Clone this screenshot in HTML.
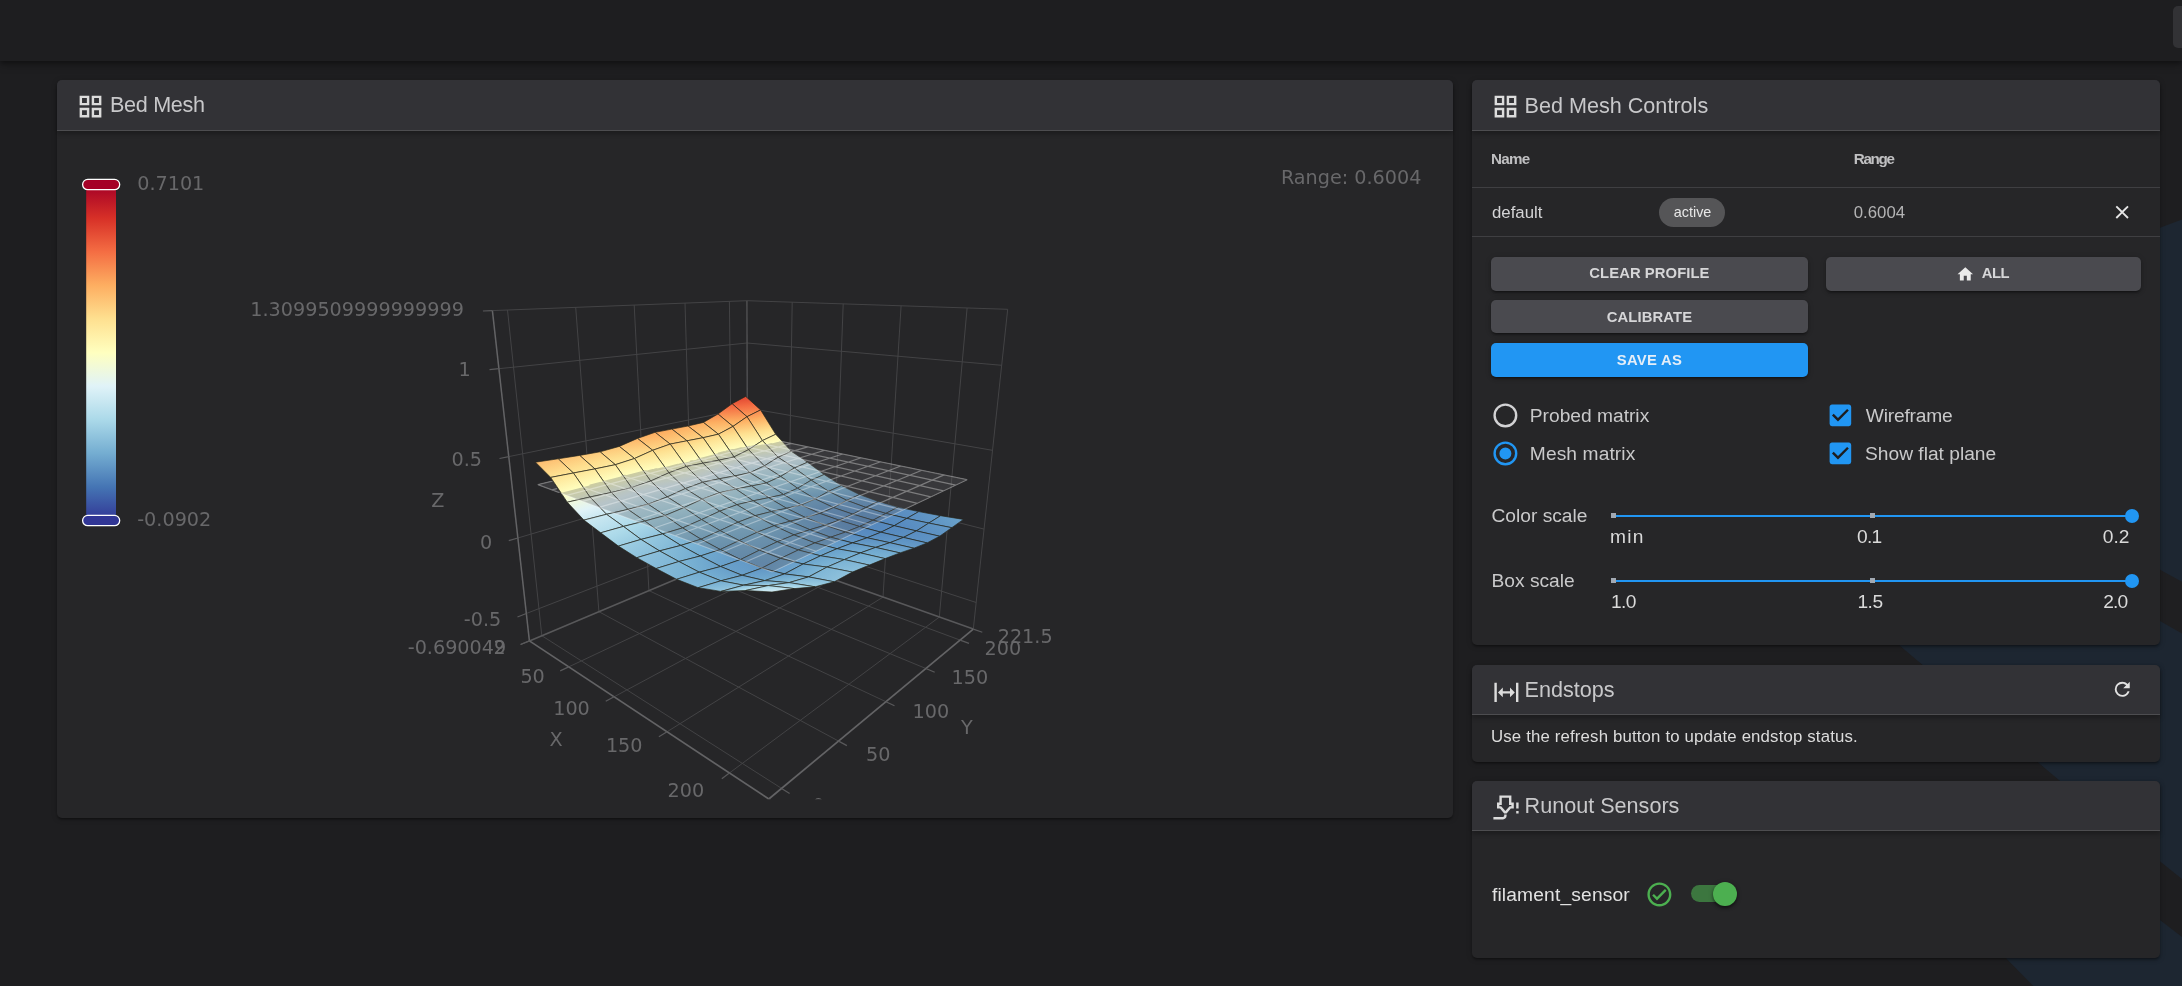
<!DOCTYPE html>
<html lang="en"><head><meta charset="utf-8"><title>fluidd</title>
<style>
html,body{margin:0;padding:0}
body{width:2182px;height:986px;overflow:hidden;background:#1e1e20;font-family:'Liberation Sans',sans-serif;position:relative}
.bg{position:absolute;left:0;top:0}
.appbar{position:absolute;left:0;top:0;width:2182px;height:61px;background:#1e1e20;box-shadow:0 2px 5px rgba(0,0,0,.35),0 5px 8px rgba(0,0,0,.18)}
.tbtn{position:absolute;left:2173px;top:6px;width:20px;height:42px;border-radius:5px;background:#323235}
.card{position:absolute;background:#262628;border-radius:5px;box-shadow:0 2px 2px -1px rgba(0,0,0,.25),0 2px 3px rgba(0,0,0,.2),0 1px 6px rgba(0,0,0,.16)}
.hd{position:absolute;left:0;top:0;right:0;height:50px;background:#323236;border-radius:5px 5px 0 0;border-bottom:1px solid #4d4d50;box-shadow:0 3px 5px rgba(0,0,0,.28)}
.t{position:absolute;white-space:nowrap}
.ic{position:absolute}
.chart{position:absolute;left:0;top:0}
.hl{position:absolute;height:1px;background:#3f3f42}
.btn{position:absolute;height:33.5px;border-radius:5px;background:#4a4a4f;box-shadow:0 3px 2px -2px rgba(0,0,0,.3),0 2px 3px rgba(0,0,0,.2),0 1px 6px rgba(0,0,0,.14)}
.chip{position:absolute;background:#555557;border-radius:15px}
.trk{position:absolute;height:2.4px;background:#2196f3}
.thumb{position:absolute;width:14px;height:14px;border-radius:50%;background:#2196f3}
.tk{position:absolute;width:5px;height:4.8px;background:#a2a9b2}
#app{position:absolute;left:0;top:0;width:2182px;height:986px;opacity:.999}
</style></head><body><div id="app">
<svg class="bg" width="2182" height="986" viewBox="0 0 2182 986">
<polygon points="2182,219.5 1634,424 1899,645 2066,786 2182,879" fill="#1d2631"/>
<polygon points="1900,426.7 2160,569.7 2182,581.8 2182,633.5 2160,621 1900,478" fill="#1f1f21"/>
<polygon points="2160,920 2182,937 2182,986 2033.3,986 2005.8,958 1960,911 2100,874" fill="#1d2631"/>
</svg>
<div class="appbar"></div><div class="tbtn"></div>
<div class="card" style="left:57px;top:80px;width:1396px;height:738px"><div class="hd"></div></div>
<svg class="ic" style="left:75.80px;top:92.20px" width="29.00" height="29.00" viewBox="0 0 24 24"><path fill="#dcdcdc" d="M3 11H11V3H3M5 5H9V9H5M13 21H21V13H13M15 15H19V19H15M3 21H11V13H3M5 15H9V19H5M13 3V11H21V3M19 9H15V5H19Z"/></svg>
<span class="t" id="t_bedmesh" style="top:91.02px;font-size:21.60px;line-height:28px;color:#c8c8ca;letter-spacing:-0.310px;left:110.00px;">Bed Mesh</span>
<div class="card" style="left:1472px;top:80px;width:688px;height:565px"><div class="hd"></div></div>
<svg class="ic" style="left:1490.90px;top:92.20px" width="29.00" height="29.00" viewBox="0 0 24 24"><path fill="#dcdcdc" d="M3 11H11V3H3M5 5H9V9H5M13 21H21V13H13M15 15H19V19H15M3 21H11V13H3M5 15H9V19H5M13 3V11H21V3M19 9H15V5H19Z"/></svg>
<span class="t" id="t_controls" style="top:91.52px;font-size:21.60px;line-height:28px;color:#c8c8ca;left:1524.55px;">Bed Mesh Controls</span>
<span class="t" id="t_name" style="top:149.23px;font-size:15.20px;line-height:20px;color:#c0c0c2;font-weight:700;letter-spacing:-0.750px;left:1491.00px;">Name</span>
<span class="t" id="t_range" style="top:149.23px;font-size:15.20px;line-height:20px;color:#c0c0c2;font-weight:700;letter-spacing:-1.300px;left:1853.75px;">Range</span>
<div class="hl" style="left:1472px;top:187px;width:688px"></div>
<span class="t" id="t_default" style="top:201.88px;font-size:16.80px;line-height:22px;color:#d4d4d6;left:1492.00px;">default</span>
<div class="chip" style="left:1659px;top:198.2px;width:66px;height:28.8px"></div>
<span class="t" id="t_active" style="top:202.51px;font-size:14.40px;line-height:19px;color:#e8e8e8;left:1673.75px;">active</span>
<span class="t" id="t_0604" style="top:201.88px;font-size:16.80px;line-height:22px;color:#b4b4b5;left:1853.75px;">0.6004</span>
<svg class="ic" style="left:2111.10px;top:200.90px" width="22.30" height="22.30" viewBox="0 0 24 24"><path fill="#e6e6e6" d="M19,6.41L17.59,5L12,10.59L6.41,5L5,6.41L10.59,12L5,17.59L6.41,19L12,13.41L17.59,19L19,17.59L13.41,12L19,6.41Z"/></svg>
<div class="hl" style="left:1472px;top:236px;width:688px"></div>
<div class="btn" style="left:1491px;top:257px;width:316.5px"></div>
<span class="t" id="t_clear" style="top:263.92px;font-size:14.80px;line-height:19px;color:#d6d6d8;font-weight:700;letter-spacing:0.080px;left:1649.44px;transform:translateX(-50%);">CLEAR PROFILE</span>
<div class="btn" style="left:1826.3px;top:257px;width:315.2px"></div>
<svg class="ic" style="left:1956.00px;top:264.50px" width="18.60" height="18.60" viewBox="0 0 24 24"><path fill="#eaeaea" d="M10,20V14H14V20H19V12H22L12,3L2,12H5V20H10Z"/></svg>
<span class="t" id="t_all" style="top:264.42px;font-size:14.80px;line-height:19px;color:#d6d6d8;font-weight:700;letter-spacing:-0.450px;left:1981.80px;">ALL</span>
<div class="btn" style="left:1491px;top:300px;width:316.5px;height:33px"></div>
<span class="t" id="t_calib" style="top:307.67px;font-size:14.80px;line-height:19px;color:#d6d6d8;font-weight:700;letter-spacing:0.120px;left:1649.46px;transform:translateX(-50%);">CALIBRATE</span>
<div class="btn" style="left:1491px;top:343px;width:316.5px;height:34px;background:#2196f3"></div>
<span class="t" id="t_saveas" style="top:350.67px;font-size:14.80px;line-height:19px;color:#e4eef8;font-weight:700;letter-spacing:0.300px;left:1649.45px;transform:translateX(-50%);">SAVE AS</span>
<svg class="ic" style="left:1490.80px;top:401.20px" width="28.80" height="28.80" viewBox="0 0 24 24"><path fill="#d2d2d4" d="M12,20A8,8 0 0,1 4,12A8,8 0 0,1 12,4A8,8 0 0,1 20,12A8,8 0 0,1 12,20M12,2A10,10 0 0,0 2,12A10,10 0 0,0 12,22A10,10 0 0,0 22,12A10,10 0 0,0 12,2Z"/></svg>
<span class="t" id="t_probed" style="top:402.85px;font-size:19.20px;line-height:25px;color:#c9c9ca;left:1529.80px;">Probed matrix</span>
<svg class="ic" style="left:1490.80px;top:439.30px" width="28.80" height="28.80" viewBox="0 0 24 24"><path fill="#2196f3" d="M12,20A8,8 0 0,1 4,12A8,8 0 0,1 12,4A8,8 0 0,1 20,12A8,8 0 0,1 12,20M12,2A10,10 0 0,0 2,12A10,10 0 0,0 12,22A10,10 0 0,0 22,12A10,10 0 0,0 12,2M12,7A5,5 0 0,0 7,12A5,5 0 0,0 12,17A5,5 0 0,0 17,12A5,5 0 0,0 12,7Z"/></svg>
<span class="t" id="t_meshm" style="top:440.85px;font-size:19.20px;line-height:25px;color:#c9c9ca;letter-spacing:0.100px;left:1529.80px;">Mesh matrix</span>
<div style="position:absolute;left:1832px;top:406px;width:18px;height:18px;background:#1d1d1f"></div>
<svg class="ic" style="left:1826.40px;top:401.00px" width="28.80" height="28.80" viewBox="0 0 24 24"><path fill="#2196f3" d="M10,17L5,12L6.41,10.58L10,14.17L17.59,6.58L19,8M19,3H5C3.89,3 3,3.89 3,5V19A2,2 0 0,0 5,21H19A2,2 0 0,0 21,19V5C21,3.89 20.1,3 19,3Z"/></svg>
<span class="t" id="t_wire" style="top:402.85px;font-size:19.20px;line-height:25px;color:#c9c9ca;letter-spacing:-0.190px;left:1865.80px;">Wireframe</span>
<div style="position:absolute;left:1832px;top:444px;width:18px;height:18px;background:#1d1d1f"></div>
<svg class="ic" style="left:1826.40px;top:439.00px" width="28.80" height="28.80" viewBox="0 0 24 24"><path fill="#2196f3" d="M10,17L5,12L6.41,10.58L10,14.17L17.59,6.58L19,8M19,3H5C3.89,3 3,3.89 3,5V19A2,2 0 0,0 5,21H19A2,2 0 0,0 21,19V5C21,3.89 20.1,3 19,3Z"/></svg>
<span class="t" id="t_flat" style="top:440.85px;font-size:19.20px;line-height:25px;color:#c9c9ca;left:1865.00px;">Show flat plane</span>
<span class="t" id="t_cscale" style="top:502.60px;font-size:19.20px;line-height:25px;color:#c9c9ca;left:1491.50px;">Color scale</span>
<div class="trk" style="left:1611.3px;top:515.05px;width:520px"></div>
<div class="tk" style="left:1611.3px;top:513.3px"></div><div class="tk" style="left:1870.3px;top:513.3px"></div>
<div class="thumb" style="left:2124.5px;top:509.25px"></div>
<span class="t" id="t_min" style="top:523.85px;font-size:19.20px;line-height:25px;color:#dadada;letter-spacing:1.200px;left:1610.00px;">min</span>
<span class="t" id="t_01" style="top:523.85px;font-size:19.20px;line-height:25px;color:#dadada;letter-spacing:-0.750px;left:1857.00px;">0.1</span>
<span class="t" id="t_02" style="top:523.85px;font-size:19.20px;line-height:25px;color:#dadada;left:2102.75px;">0.2</span>
<span class="t" id="t_bscale" style="top:568.35px;font-size:19.20px;line-height:25px;color:#c9c9ca;left:1491.50px;">Box scale</span>
<div class="trk" style="left:1611.3px;top:580.05px;width:520px"></div>
<div class="tk" style="left:1611.3px;top:578.3px"></div><div class="tk" style="left:1870.3px;top:578.3px"></div>
<div class="thumb" style="left:2124.5px;top:574.25px"></div>
<span class="t" id="t_10" style="top:588.85px;font-size:19.20px;line-height:25px;color:#dadada;letter-spacing:-0.650px;left:1611.00px;">1.0</span>
<span class="t" id="t_15" style="top:588.85px;font-size:19.20px;line-height:25px;color:#dadada;letter-spacing:-0.500px;left:1857.45px;">1.5</span>
<span class="t" id="t_20" style="top:588.85px;font-size:19.20px;line-height:25px;color:#dadada;letter-spacing:-0.900px;left:2103.25px;">2.0</span>
<div class="card" style="left:1472px;top:665px;width:688px;height:97px"><div class="hd" style="height:49px"></div></div>
<svg class="ic" style="left:1491.60px;top:677.70px" width="28.80" height="28.80" viewBox="0 0 24 24"><path fill="#dcdcdc" d="M9,11H15V8L19,12L15,16V13H9V16L5,12L9,8V11M2,20V4H4V20H2M20,20V4H22V20H20Z"/></svg>
<span class="t" id="t_endstops" style="top:675.52px;font-size:21.60px;line-height:28px;color:#c8c8ca;left:1524.55px;">Endstops</span>
<svg class="ic" style="left:2111.25px;top:678.25px" width="22.50" height="22.50" viewBox="0 0 24 24"><path fill="#e2e2e2" d="M17.65,6.35C16.2,4.9 14.21,4 12,4A8,8 0 0,0 4,12A8,8 0 0,0 12,20C15.73,20 18.84,17.45 19.73,14H17.65C16.83,16.33 14.61,18 12,18A6,6 0 0,1 6,12A6,6 0 0,1 12,6C13.66,6 15.14,6.69 16.22,7.78L13,11H20V4L17.65,6.35Z"/></svg>
<span class="t" id="t_use" style="top:726.18px;font-size:16.80px;line-height:22px;color:#dcdcdc;letter-spacing:0.160px;left:1491.00px;">Use the refresh button to update endstop status.</span>
<div class="card" style="left:1472px;top:781px;width:688px;height:177px"><div class="hd" style="height:49px"></div></div>
<svg class="ic" style="left:1490.90px;top:793.00px" width="28.80" height="28.80" viewBox="0 0 24 24"><path fill="#dcdcdc" d="M7 2H17V8H19V13H16.5L13 17H11L7.5 13H5V8H7V2M10 22H2V20H10C10.6 20 11 19.6 11 19V18H13V19C13 20.7 11.7 22 10 22M9 4V10H7V11H8.5L12 15L15.5 11H17V10H15V4H9M21 13V8H23V13H21M21 17V15H23V17H21Z"/></svg>
<span class="t" id="t_runout" style="top:791.52px;font-size:21.60px;line-height:28px;color:#c8c8ca;left:1524.55px;">Runout Sensors</span>
<span class="t" id="t_fil" style="top:881.55px;font-size:19.20px;line-height:25px;color:#e2e2e2;letter-spacing:0.170px;left:1491.90px;">filament_sensor</span>
<svg class="ic" style="left:1644.90px;top:880.00px" width="28.80" height="28.80" viewBox="0 0 24 24"><path fill="#4caf50" d="M12 2C6.5 2 2 6.5 2 12S6.5 22 12 22 22 17.5 22 12 17.5 2 12 2M12 20C7.59 20 4 16.41 4 12S7.59 4 12 4 20 7.59 20 12 16.41 20 12 20M16.59 7.58L10 14.17L7.41 11.59L6 13L10 17L18 9L16.59 7.58Z"/></svg>
<div style="position:absolute;left:1690.8px;top:885.4px;width:43.2px;height:16.8px;border-radius:8.4px;background:#3c763f"></div>
<div style="position:absolute;left:1712.8px;top:882px;width:24px;height:24px;border-radius:50%;background:#4caf50;box-shadow:0 2px 3px rgba(0,0,0,.4),0 1px 5px rgba(0,0,0,.25)"></div>
<svg class="chart" width="2182" height="986" viewBox="0 0 2182 986" font-family="'DejaVu Sans',sans-serif">
<defs><linearGradient id="vm" x1="0" y1="0" x2="0" y2="1">
<stop offset="0%" stop-color="#a50026"/>
<stop offset="10%" stop-color="#d73027"/>
<stop offset="20%" stop-color="#f46d43"/>
<stop offset="30%" stop-color="#fdae61"/>
<stop offset="40%" stop-color="#fee090"/>
<stop offset="50%" stop-color="#ffffbf"/>
<stop offset="60%" stop-color="#e0f3f8"/>
<stop offset="70%" stop-color="#abd9e9"/>
<stop offset="80%" stop-color="#74add1"/>
<stop offset="90%" stop-color="#4575b4"/>
<stop offset="100%" stop-color="#313695"/>
</linearGradient><clipPath id="cv"><rect x="58" y="131" width="1394" height="668.3"/></clipPath></defs>
<g clip-path="url(#cv)">
<g fill="none" stroke-linecap="butt"><line x1="568.7" y1="666.9" x2="788.1" y2="563.4" stroke="#434345" stroke-width="1"/><line x1="614.1" y1="696.8" x2="833.0" y2="579.3" stroke="#434345" stroke-width="1"/><line x1="667.0" y1="731.8" x2="883.0" y2="597.1" stroke="#434345" stroke-width="1"/><line x1="729.4" y1="773.0" x2="939.3" y2="617.1" stroke="#434345" stroke-width="1"/><line x1="541.8" y1="635.7" x2="781.6" y2="788.4" stroke="#434345" stroke-width="1"/><line x1="598.9" y1="611.7" x2="838.6" y2="741.1" stroke="#434345" stroke-width="1"/><line x1="648.9" y1="590.6" x2="885.9" y2="701.7" stroke="#434345" stroke-width="1"/><line x1="693.0" y1="572.1" x2="925.9" y2="668.5" stroke="#434345" stroke-width="1"/><line x1="732.2" y1="555.6" x2="960.1" y2="640.1" stroke="#434345" stroke-width="1"/><line x1="541.8" y1="635.7" x2="507.5" y2="310.1" stroke="#434345" stroke-width="1"/><line x1="598.9" y1="611.7" x2="575.7" y2="307.4" stroke="#434345" stroke-width="1"/><line x1="648.9" y1="590.6" x2="634.2" y2="305.1" stroke="#434345" stroke-width="1"/><line x1="693.0" y1="572.1" x2="685.0" y2="303.1" stroke="#434345" stroke-width="1"/><line x1="732.2" y1="555.6" x2="729.4" y2="301.4" stroke="#434345" stroke-width="1"/><line x1="526.3" y1="613.5" x2="747.7" y2="527.8" stroke="#434345" stroke-width="1"/><line x1="517.9" y1="538.0" x2="747.5" y2="469.5" stroke="#434345" stroke-width="1"/><line x1="508.8" y1="456.6" x2="747.3" y2="408.0" stroke="#434345" stroke-width="1"/><line x1="498.9" y1="368.7" x2="747.0" y2="343.0" stroke="#434345" stroke-width="1"/><line x1="788.1" y1="563.4" x2="792.2" y2="302.2" stroke="#434345" stroke-width="1"/><line x1="833.0" y1="579.3" x2="843.2" y2="303.9" stroke="#434345" stroke-width="1"/><line x1="883.0" y1="597.1" x2="901.1" y2="305.8" stroke="#434345" stroke-width="1"/><line x1="939.3" y1="617.1" x2="967.1" y2="308.0" stroke="#434345" stroke-width="1"/><line x1="747.7" y1="527.8" x2="976.2" y2="602.5" stroke="#434345" stroke-width="1"/><line x1="747.5" y1="469.5" x2="984.1" y2="529.1" stroke="#434345" stroke-width="1"/><line x1="747.3" y1="408.0" x2="992.5" y2="450.3" stroke="#434345" stroke-width="1"/><line x1="747.0" y1="343.0" x2="1001.7" y2="365.3" stroke="#434345" stroke-width="1"/><line x1="492.4" y1="310.6" x2="746.9" y2="300.7" stroke="#434345" stroke-width="1"/><line x1="746.9" y1="300.7" x2="1007.7" y2="309.3" stroke="#434345" stroke-width="1"/><line x1="973.3" y1="629.1" x2="1007.7" y2="309.3" stroke="#434345" stroke-width="1"/><line x1="747.8" y1="549.1" x2="746.9" y2="300.7" stroke="#505052" stroke-width="1.4"/><line x1="529.4" y1="640.9" x2="747.8" y2="549.1" stroke="#58585a" stroke-width="1.6"/><line x1="747.8" y1="549.1" x2="973.3" y2="629.1" stroke="#58585a" stroke-width="1.6"/><line x1="529.4" y1="640.9" x2="768.8" y2="799.0" stroke="#636365" stroke-width="1.7"/><line x1="768.8" y1="799.0" x2="973.3" y2="629.1" stroke="#636365" stroke-width="1.7"/><line x1="529.4" y1="640.9" x2="492.4" y2="310.6" stroke="#636365" stroke-width="1.5"/><line x1="529.4" y1="640.9" x2="520.6" y2="644.5" stroke="#59595b" stroke-width="1.2"/><line x1="568.7" y1="666.9" x2="560.2" y2="670.9" stroke="#59595b" stroke-width="1.2"/><line x1="614.1" y1="696.8" x2="605.7" y2="701.3" stroke="#59595b" stroke-width="1.2"/><line x1="667.0" y1="731.8" x2="658.9" y2="736.8" stroke="#59595b" stroke-width="1.2"/><line x1="729.4" y1="773.0" x2="721.8" y2="778.7" stroke="#59595b" stroke-width="1.2"/><line x1="768.8" y1="799.0" x2="761.5" y2="805.1" stroke="#59595b" stroke-width="1.2"/><line x1="768.8" y1="799.0" x2="776.7" y2="804.2" stroke="#59595b" stroke-width="1.2"/><line x1="781.6" y1="788.4" x2="789.6" y2="793.5" stroke="#59595b" stroke-width="1.2"/><line x1="838.6" y1="741.1" x2="846.9" y2="745.6" stroke="#59595b" stroke-width="1.2"/><line x1="885.9" y1="701.7" x2="894.5" y2="705.8" stroke="#59595b" stroke-width="1.2"/><line x1="925.9" y1="668.5" x2="934.7" y2="672.2" stroke="#59595b" stroke-width="1.2"/><line x1="960.1" y1="640.1" x2="969.0" y2="643.4" stroke="#59595b" stroke-width="1.2"/><line x1="973.3" y1="629.1" x2="982.3" y2="632.3" stroke="#59595b" stroke-width="1.2"/><line x1="529.4" y1="640.9" x2="520.6" y2="644.5" stroke="#59595b" stroke-width="1.2"/><line x1="526.3" y1="613.5" x2="517.5" y2="617.0" stroke="#59595b" stroke-width="1.2"/><line x1="517.9" y1="538.0" x2="508.8" y2="540.7" stroke="#59595b" stroke-width="1.2"/><line x1="508.8" y1="456.6" x2="499.5" y2="458.5" stroke="#59595b" stroke-width="1.2"/><line x1="498.9" y1="368.7" x2="489.5" y2="369.7" stroke="#59595b" stroke-width="1.2"/><line x1="492.4" y1="310.6" x2="482.9" y2="311.0" stroke="#59595b" stroke-width="1.2"/></g>

<g stroke-linejoin="round"><defs><linearGradient id="g1" gradientUnits="userSpaceOnUse" x1="747.3" y1="416.7" x2="745.5" y2="396.4"><stop offset="0.000" stop-color="#fb9e5a"/><stop offset="0.529" stop-color="#f46d43"/><stop offset="1.000" stop-color="#e04430"/></linearGradient><linearGradient id="g2" gradientUnits="userSpaceOnUse" x1="764.0" y1="440.3" x2="758.8" y2="410.2"><stop offset="0.000" stop-color="#fff6b2"/><stop offset="0.310" stop-color="#fee090"/><stop offset="0.739" stop-color="#fdae61"/><stop offset="1.000" stop-color="#f8864f"/></linearGradient><linearGradient id="g3" gradientUnits="userSpaceOnUse" x1="733.0" y1="426.4" x2="732.1" y2="403.7"><stop offset="0.000" stop-color="#fdc173"/><stop offset="0.236" stop-color="#fdae61"/><stop offset="0.860" stop-color="#f46d43"/><stop offset="1.000" stop-color="#ee5f3d"/></linearGradient><linearGradient id="g4" gradientUnits="userSpaceOnUse" x1="779.0" y1="457.1" x2="774.7" y2="434.5"><stop offset="0.000" stop-color="#e1f3f6"/><stop offset="0.637" stop-color="#ffffbf"/><stop offset="1.000" stop-color="#feeea5"/></linearGradient><linearGradient id="g5" gradientUnits="userSpaceOnUse" x1="749.9" y1="449.5" x2="745.5" y2="416.9"><stop offset="0.000" stop-color="#f8fccc"/><stop offset="0.095" stop-color="#ffffbf"/><stop offset="0.499" stop-color="#fee090"/><stop offset="0.903" stop-color="#fdae61"/><stop offset="1.000" stop-color="#fb9e5a"/></linearGradient><linearGradient id="g6" gradientUnits="userSpaceOnUse" x1="718.9" y1="434.2" x2="717.5" y2="414.1"><stop offset="0.000" stop-color="#fed586"/><stop offset="0.605" stop-color="#fdae61"/><stop offset="1.000" stop-color="#f88d52"/></linearGradient><linearGradient id="g7" gradientUnits="userSpaceOnUse" x1="794.2" y1="468.0" x2="791.4" y2="451.3"><stop offset="0.000" stop-color="#c0e3ef"/><stop offset="0.714" stop-color="#e0f3f8"/><stop offset="1.000" stop-color="#e7f6ea"/></linearGradient><linearGradient id="g8" gradientUnits="userSpaceOnUse" x1="764.8" y1="465.9" x2="761.7" y2="440.7"><stop offset="0.000" stop-color="#cbe9f2"/><stop offset="0.233" stop-color="#e0f3f8"/><stop offset="0.833" stop-color="#ffffbf"/><stop offset="1.000" stop-color="#fff6b2"/></linearGradient><linearGradient id="g9" gradientUnits="userSpaceOnUse" x1="736.0" y1="456.6" x2="730.9" y2="426.8"><stop offset="0.000" stop-color="#eef9de"/><stop offset="0.249" stop-color="#ffffbf"/><stop offset="0.713" stop-color="#fee090"/><stop offset="1.000" stop-color="#fdc173"/></linearGradient><linearGradient id="g10" gradientUnits="userSpaceOnUse" x1="811.3" y1="480.2" x2="807.3" y2="462.2"><stop offset="0.000" stop-color="#98cae1"/><stop offset="0.386" stop-color="#abd9e9"/><stop offset="1.000" stop-color="#c8e7f1"/></linearGradient><linearGradient id="g11" gradientUnits="userSpaceOnUse" x1="704.8" y1="437.3" x2="701.6" y2="422.7"><stop offset="0.000" stop-color="#fed585"/><stop offset="0.966" stop-color="#fdae61"/><stop offset="1.000" stop-color="#fdac60"/></linearGradient><linearGradient id="g12" gradientUnits="userSpaceOnUse" x1="780.0" y1="476.4" x2="778.7" y2="457.2"><stop offset="0.000" stop-color="#addae9"/><stop offset="0.960" stop-color="#e0f3f8"/><stop offset="1.000" stop-color="#e1f3f6"/></linearGradient><linearGradient id="g13" gradientUnits="userSpaceOnUse" x1="751.1" y1="472.5" x2="747.1" y2="449.9"><stop offset="0.000" stop-color="#c0e3ef"/><stop offset="0.443" stop-color="#e0f3f8"/><stop offset="1.000" stop-color="#f8fccc"/></linearGradient><linearGradient id="g14" gradientUnits="userSpaceOnUse" x1="722.0" y1="460.1" x2="715.2" y2="434.5"><stop offset="0.000" stop-color="#eff9dc"/><stop offset="0.288" stop-color="#ffffbf"/><stop offset="0.856" stop-color="#fee090"/><stop offset="1.000" stop-color="#fed384"/></linearGradient><linearGradient id="g15" gradientUnits="userSpaceOnUse" x1="828.5" y1="491.4" x2="824.2" y2="474.5"><stop offset="0.000" stop-color="#76afd2"/><stop offset="1.000" stop-color="#9ecfe3"/></linearGradient><linearGradient id="g16" gradientUnits="userSpaceOnUse" x1="797.2" y1="488.3" x2="794.7" y2="467.9"><stop offset="0.000" stop-color="#87bcd9"/><stop offset="0.622" stop-color="#abd9e9"/><stop offset="1.000" stop-color="#c0e3ef"/></linearGradient><linearGradient id="g17" gradientUnits="userSpaceOnUse" x1="689.4" y1="441.1" x2="685.6" y2="425.8"><stop offset="0.000" stop-color="#fed484"/><stop offset="0.959" stop-color="#fdae61"/><stop offset="1.000" stop-color="#fdac60"/></linearGradient><linearGradient id="g18" gradientUnits="userSpaceOnUse" x1="766.6" y1="482.9" x2="764.0" y2="466.0"><stop offset="0.000" stop-color="#a4d3e6"/><stop offset="0.180" stop-color="#abd9e9"/><stop offset="1.000" stop-color="#cce9f2"/></linearGradient><linearGradient id="g19" gradientUnits="userSpaceOnUse" x1="738.1" y1="476.9" x2="730.8" y2="456.0"><stop offset="0.000" stop-color="#c1e4ef"/><stop offset="0.507" stop-color="#e0f3f8"/><stop offset="1.000" stop-color="#f2fad8"/></linearGradient><linearGradient id="g20" gradientUnits="userSpaceOnUse" x1="846.1" y1="500.6" x2="842.1" y2="485.4"><stop offset="0.000" stop-color="#649ac7"/><stop offset="0.730" stop-color="#74add1"/><stop offset="1.000" stop-color="#7bb3d4"/></linearGradient><linearGradient id="g21" gradientUnits="userSpaceOnUse" x1="814.4" y1="499.1" x2="811.9" y2="480.1"><stop offset="0.000" stop-color="#6ba2cb"/><stop offset="0.231" stop-color="#74add1"/><stop offset="1.000" stop-color="#98cae1"/></linearGradient><linearGradient id="g22" gradientUnits="userSpaceOnUse" x1="706.6" y1="463.6" x2="699.3" y2="437.4"><stop offset="0.000" stop-color="#f2fad7"/><stop offset="0.246" stop-color="#ffffbf"/><stop offset="0.821" stop-color="#fee090"/><stop offset="1.000" stop-color="#fed081"/></linearGradient><linearGradient id="g23" gradientUnits="userSpaceOnUse" x1="784.0" y1="494.4" x2="780.1" y2="476.5"><stop offset="0.000" stop-color="#81b7d7"/><stop offset="0.959" stop-color="#abd9e9"/><stop offset="1.000" stop-color="#addae9"/></linearGradient><linearGradient id="g24" gradientUnits="userSpaceOnUse" x1="756.0" y1="488.8" x2="745.3" y2="469.9"><stop offset="0.000" stop-color="#a5d4e6"/><stop offset="0.178" stop-color="#abd9e9"/><stop offset="1.000" stop-color="#c8e7f1"/></linearGradient><linearGradient id="g25" gradientUnits="userSpaceOnUse" x1="673.0" y1="444.3" x2="669.1" y2="428.8"><stop offset="0.000" stop-color="#fed182"/><stop offset="0.912" stop-color="#fdae61"/><stop offset="1.000" stop-color="#fcaa5f"/></linearGradient><linearGradient id="g26" gradientUnits="userSpaceOnUse" x1="723.0" y1="480.3" x2="714.9" y2="458.7"><stop offset="0.000" stop-color="#c8e7f1"/><stop offset="0.401" stop-color="#e0f3f8"/><stop offset="1.000" stop-color="#f5fbd1"/></linearGradient><linearGradient id="g27" gradientUnits="userSpaceOnUse" x1="864.0" y1="507.8" x2="861.3" y2="494.3"><stop offset="0.000" stop-color="#5c90c2"/><stop offset="1.000" stop-color="#679dc9"/></linearGradient><linearGradient id="g28" gradientUnits="userSpaceOnUse" x1="832.0" y1="507.8" x2="830.2" y2="491.2"><stop offset="0.000" stop-color="#5c90c2"/><stop offset="0.930" stop-color="#74add1"/><stop offset="1.000" stop-color="#76afd2"/></linearGradient><linearGradient id="g29" gradientUnits="userSpaceOnUse" x1="801.6" y1="504.9" x2="797.2" y2="488.4"><stop offset="0.000" stop-color="#689fca"/><stop offset="0.415" stop-color="#74add1"/><stop offset="1.000" stop-color="#87bcd9"/></linearGradient><linearGradient id="g30" gradientUnits="userSpaceOnUse" x1="690.2" y1="466.6" x2="683.0" y2="440.6"><stop offset="0.000" stop-color="#f5fbd1"/><stop offset="0.187" stop-color="#ffffbf"/><stop offset="0.784" stop-color="#fee090"/><stop offset="1.000" stop-color="#fece7f"/></linearGradient><linearGradient id="g31" gradientUnits="userSpaceOnUse" x1="774.0" y1="500.5" x2="761.0" y2="480.0"><stop offset="0.000" stop-color="#82b8d7"/><stop offset="0.949" stop-color="#abd9e9"/><stop offset="1.000" stop-color="#addaea"/></linearGradient><linearGradient id="g32" gradientUnits="userSpaceOnUse" x1="655.1" y1="450.0" x2="652.7" y2="432.6"><stop offset="0.000" stop-color="#fed888"/><stop offset="0.939" stop-color="#fdae61"/><stop offset="1.000" stop-color="#fdaa5f"/></linearGradient><linearGradient id="g33" gradientUnits="userSpaceOnUse" x1="741.6" y1="492.3" x2="729.0" y2="472.5"><stop offset="0.000" stop-color="#addaea"/><stop offset="1.000" stop-color="#d0ebf3"/></linearGradient><linearGradient id="g34" gradientUnits="userSpaceOnUse" x1="882.4" y1="513.6" x2="881.7" y2="501.2"><stop offset="0.000" stop-color="#588cc0"/><stop offset="1.000" stop-color="#5e93c4"/></linearGradient><linearGradient id="g35" gradientUnits="userSpaceOnUse" x1="706.4" y1="483.3" x2="699.0" y2="462.1"><stop offset="0.000" stop-color="#d0ebf3"/><stop offset="0.282" stop-color="#e0f3f8"/><stop offset="1.000" stop-color="#f8fccc"/></linearGradient><linearGradient id="g36" gradientUnits="userSpaceOnUse" x1="850.1" y1="514.3" x2="849.5" y2="500.3"><stop offset="0.000" stop-color="#568abf"/><stop offset="1.000" stop-color="#6499c7"/></linearGradient><linearGradient id="g37" gradientUnits="userSpaceOnUse" x1="819.7" y1="513.5" x2="815.3" y2="499.0"><stop offset="0.000" stop-color="#5c90c2"/><stop offset="1.000" stop-color="#6ba2cb"/></linearGradient><linearGradient id="g38" gradientUnits="userSpaceOnUse" x1="794.7" y1="511.4" x2="775.3" y2="491.3"><stop offset="0.000" stop-color="#69a0ca"/><stop offset="0.344" stop-color="#74add1"/><stop offset="1.000" stop-color="#8cc0dc"/></linearGradient><linearGradient id="g39" gradientUnits="userSpaceOnUse" x1="672.4" y1="472.0" x2="666.7" y2="444.8"><stop offset="0.000" stop-color="#f3fbd4"/><stop offset="0.219" stop-color="#ffffbf"/><stop offset="0.803" stop-color="#fee090"/><stop offset="1.000" stop-color="#fecf80"/></linearGradient><linearGradient id="g40" gradientUnits="userSpaceOnUse" x1="759.5" y1="503.9" x2="745.1" y2="482.7"><stop offset="0.000" stop-color="#8cc0dc"/><stop offset="0.722" stop-color="#abd9e9"/><stop offset="1.000" stop-color="#b6dfec"/></linearGradient><linearGradient id="g41" gradientUnits="userSpaceOnUse" x1="636.9" y1="458.3" x2="635.1" y2="438.6"><stop offset="0.000" stop-color="#fee597"/><stop offset="0.154" stop-color="#fee090"/><stop offset="1.000" stop-color="#fdb568"/></linearGradient><linearGradient id="g42" gradientUnits="userSpaceOnUse" x1="724.2" y1="495.1" x2="714.2" y2="476.2"><stop offset="0.000" stop-color="#b6dfec"/><stop offset="1.000" stop-color="#d6eef5"/></linearGradient><linearGradient id="g43" gradientUnits="userSpaceOnUse" x1="895.5" y1="521.2" x2="909.4" y2="504.0"><stop offset="0.000" stop-color="#588cc0"/><stop offset="1.000" stop-color="#5e92c3"/></linearGradient><linearGradient id="g44" gradientUnits="userSpaceOnUse" x1="869.0" y1="520.0" x2="869.8" y2="507.6"><stop offset="0.000" stop-color="#5588be"/><stop offset="1.000" stop-color="#5b90c2"/></linearGradient><linearGradient id="g45" gradientUnits="userSpaceOnUse" x1="838.7" y1="520.4" x2="834.1" y2="507.4"><stop offset="0.000" stop-color="#578abf"/><stop offset="1.000" stop-color="#5d91c3"/></linearGradient><linearGradient id="g46" gradientUnits="userSpaceOnUse" x1="688.1" y1="488.0" x2="683.4" y2="467.2"><stop offset="0.000" stop-color="#d0ebf4"/><stop offset="0.282" stop-color="#e0f3f8"/><stop offset="1.000" stop-color="#f8fccd"/></linearGradient><linearGradient id="g47" gradientUnits="userSpaceOnUse" x1="818.5" y1="516.8" x2="787.8" y2="505.2"><stop offset="0.000" stop-color="#5c90c2"/><stop offset="1.000" stop-color="#72aad0"/></linearGradient><linearGradient id="g48" gradientUnits="userSpaceOnUse" x1="654.4" y1="480.4" x2="649.1" y2="450.9"><stop offset="0.000" stop-color="#ebf7e4"/><stop offset="0.357" stop-color="#ffffbf"/><stop offset="0.913" stop-color="#fee090"/><stop offset="1.000" stop-color="#fed889"/></linearGradient><linearGradient id="g49" gradientUnits="userSpaceOnUse" x1="780.8" y1="514.6" x2="759.1" y2="494.4"><stop offset="0.000" stop-color="#72abd0"/><stop offset="0.052" stop-color="#74add1"/><stop offset="1.000" stop-color="#97c9e0"/></linearGradient><linearGradient id="g50" gradientUnits="userSpaceOnUse" x1="741.9" y1="507.0" x2="730.7" y2="486.5"><stop offset="0.000" stop-color="#97c9e0"/><stop offset="0.512" stop-color="#abd9e9"/><stop offset="1.000" stop-color="#bde2ee"/></linearGradient><linearGradient id="g51" gradientUnits="userSpaceOnUse" x1="618.8" y1="464.0" x2="615.8" y2="447.0"><stop offset="0.000" stop-color="#fee89d"/><stop offset="0.344" stop-color="#fee090"/><stop offset="1.000" stop-color="#fdc677"/></linearGradient><linearGradient id="g52" gradientUnits="userSpaceOnUse" x1="704.1" y1="498.8" x2="700.6" y2="482.8"><stop offset="0.000" stop-color="#b9e0ed"/><stop offset="1.000" stop-color="#d5eef5"/></linearGradient><linearGradient id="g53" gradientUnits="userSpaceOnUse" x1="911.9" y1="525.6" x2="935.7" y2="508.7"><stop offset="0.000" stop-color="#5a8ec1"/><stop offset="1.000" stop-color="#6399c7"/></linearGradient><linearGradient id="g54" gradientUnits="userSpaceOnUse" x1="886.2" y1="526.9" x2="893.8" y2="511.8"><stop offset="0.000" stop-color="#5588be"/><stop offset="1.000" stop-color="#5a8ec1"/></linearGradient><linearGradient id="g55" gradientUnits="userSpaceOnUse" x1="858.8" y1="526.8" x2="853.6" y2="513.9"><stop offset="0.000" stop-color="#5588be"/><stop offset="1.000" stop-color="#578abf"/></linearGradient><linearGradient id="g56" gradientUnits="userSpaceOnUse" x1="670.0" y1="496.4" x2="666.0" y2="473.3"><stop offset="0.000" stop-color="#c4e5f0"/><stop offset="0.458" stop-color="#e0f3f8"/><stop offset="1.000" stop-color="#f3fbd4"/></linearGradient><linearGradient id="g57" gradientUnits="userSpaceOnUse" x1="836.8" y1="513.7" x2="807.9" y2="524.4"><stop offset="0.000" stop-color="#568abf"/><stop offset="1.000" stop-color="#6399c6"/></linearGradient><linearGradient id="g58" gradientUnits="userSpaceOnUse" x1="804.7" y1="519.5" x2="771.8" y2="509.7"><stop offset="0.000" stop-color="#6399c7"/><stop offset="0.669" stop-color="#74add1"/><stop offset="1.000" stop-color="#7eb5d5"/></linearGradient><linearGradient id="g59" gradientUnits="userSpaceOnUse" x1="636.1" y1="486.7" x2="630.0" y2="459.5"><stop offset="0.000" stop-color="#e8f6ea"/><stop offset="0.473" stop-color="#ffffbf"/><stop offset="1.000" stop-color="#fee597"/></linearGradient><linearGradient id="g60" gradientUnits="userSpaceOnUse" x1="762.0" y1="518.6" x2="746.1" y2="497.7"><stop offset="0.000" stop-color="#7eb5d5"/><stop offset="1.000" stop-color="#9fd0e4"/></linearGradient><linearGradient id="g61" gradientUnits="userSpaceOnUse" x1="599.8" y1="468.8" x2="595.1" y2="451.3"><stop offset="0.000" stop-color="#fee89d"/><stop offset="0.350" stop-color="#fee090"/><stop offset="1.000" stop-color="#fdc778"/></linearGradient><linearGradient id="g62" gradientUnits="userSpaceOnUse" x1="721.8" y1="510.6" x2="717.2" y2="493.3"><stop offset="0.000" stop-color="#9ccde2"/><stop offset="0.455" stop-color="#abd9e9"/><stop offset="1.000" stop-color="#bce2ee"/></linearGradient><linearGradient id="g63" gradientUnits="userSpaceOnUse" x1="685.7" y1="507.4" x2="683.6" y2="488.8"><stop offset="0.000" stop-color="#aedaea"/><stop offset="1.000" stop-color="#d0ebf4"/></linearGradient><linearGradient id="g64" gradientUnits="userSpaceOnUse" x1="936.2" y1="530.9" x2="956.2" y2="511.8"><stop offset="0.000" stop-color="#5e93c3"/><stop offset="1.000" stop-color="#6aa2cb"/></linearGradient><linearGradient id="g65" gradientUnits="userSpaceOnUse" x1="902.8" y1="533.8" x2="920.3" y2="515.1"><stop offset="0.000" stop-color="#5689bf"/><stop offset="1.000" stop-color="#5e93c4"/></linearGradient><linearGradient id="g66" gradientUnits="userSpaceOnUse" x1="874.6" y1="519.7" x2="879.3" y2="532.7"><stop offset="0.000" stop-color="#5588be"/><stop offset="1.000" stop-color="#578abf"/></linearGradient><linearGradient id="g67" gradientUnits="userSpaceOnUse" x1="848.1" y1="518.1" x2="836.6" y2="533.8"><stop offset="0.000" stop-color="#5588be"/><stop offset="1.000" stop-color="#5c90c2"/></linearGradient><linearGradient id="g68" gradientUnits="userSpaceOnUse" x1="651.9" y1="503.3" x2="647.0" y2="481.9"><stop offset="0.000" stop-color="#bee2ee"/><stop offset="0.637" stop-color="#e0f3f8"/><stop offset="1.000" stop-color="#ebf7e3"/></linearGradient><linearGradient id="g69" gradientUnits="userSpaceOnUse" x1="822.4" y1="518.2" x2="792.8" y2="528.6"><stop offset="0.000" stop-color="#5b90c2"/><stop offset="1.000" stop-color="#6da4cc"/></linearGradient><linearGradient id="g70" gradientUnits="userSpaceOnUse" x1="785.1" y1="527.9" x2="760.0" y2="509.1"><stop offset="0.000" stop-color="#6da5cd"/><stop offset="0.303" stop-color="#74add1"/><stop offset="1.000" stop-color="#87bcd9"/></linearGradient><linearGradient id="g71" gradientUnits="userSpaceOnUse" x1="617.0" y1="491.8" x2="609.5" y2="464.9"><stop offset="0.000" stop-color="#e8f6e9"/><stop offset="0.481" stop-color="#ffffbf"/><stop offset="1.000" stop-color="#fee69a"/></linearGradient><linearGradient id="g72" gradientUnits="userSpaceOnUse" x1="740.0" y1="521.6" x2="734.8" y2="505.3"><stop offset="0.000" stop-color="#85bbd9"/><stop offset="1.000" stop-color="#9ecfe3"/></linearGradient><linearGradient id="g73" gradientUnits="userSpaceOnUse" x1="703.5" y1="519.3" x2="700.2" y2="499.5"><stop offset="0.000" stop-color="#93c5de"/><stop offset="0.638" stop-color="#abd9e9"/><stop offset="1.000" stop-color="#b8e0ed"/></linearGradient><linearGradient id="g74" gradientUnits="userSpaceOnUse" x1="579.1" y1="473.3" x2="573.8" y2="454.4"><stop offset="0.000" stop-color="#fee79a"/><stop offset="0.265" stop-color="#fee090"/><stop offset="1.000" stop-color="#fdc274"/></linearGradient><linearGradient id="g75" gradientUnits="userSpaceOnUse" x1="667.7" y1="514.9" x2="664.4" y2="497.4"><stop offset="0.000" stop-color="#a7d6e7"/><stop offset="0.130" stop-color="#abd9e9"/><stop offset="1.000" stop-color="#c4e5f0"/></linearGradient><linearGradient id="g76" gradientUnits="userSpaceOnUse" x1="926.4" y1="539.0" x2="942.1" y2="519.8"><stop offset="0.000" stop-color="#598dc0"/><stop offset="1.000" stop-color="#6399c7"/></linearGradient><linearGradient id="g77" gradientUnits="userSpaceOnUse" x1="896.6" y1="524.9" x2="900.9" y2="538.2"><stop offset="0.000" stop-color="#5689bf"/><stop offset="1.000" stop-color="#5a8fc1"/></linearGradient><linearGradient id="g78" gradientUnits="userSpaceOnUse" x1="863.8" y1="526.9" x2="862.7" y2="537.3"><stop offset="0.000" stop-color="#5588be"/><stop offset="1.000" stop-color="#5b8fc2"/></linearGradient><linearGradient id="g79" gradientUnits="userSpaceOnUse" x1="633.3" y1="509.1" x2="626.1" y2="487.6"><stop offset="0.000" stop-color="#bfe3ef"/><stop offset="0.656" stop-color="#e0f3f8"/><stop offset="1.000" stop-color="#eaf7e5"/></linearGradient><linearGradient id="g80" gradientUnits="userSpaceOnUse" x1="833.6" y1="523.2" x2="821.9" y2="538.8"><stop offset="0.000" stop-color="#598cc0"/><stop offset="1.000" stop-color="#6399c7"/></linearGradient><linearGradient id="g81" gradientUnits="userSpaceOnUse" x1="809.4" y1="531.9" x2="774.5" y2="523.8"><stop offset="0.000" stop-color="#6399c7"/><stop offset="1.000" stop-color="#74add1"/></linearGradient><linearGradient id="g82" gradientUnits="userSpaceOnUse" x1="759.0" y1="531.6" x2="753.1" y2="516.4"><stop offset="0.000" stop-color="#75aed1"/><stop offset="1.000" stop-color="#86bcd9"/></linearGradient><linearGradient id="g83" gradientUnits="userSpaceOnUse" x1="596.3" y1="496.7" x2="588.4" y2="468.7"><stop offset="0.000" stop-color="#eaf7e5"/><stop offset="0.433" stop-color="#ffffbf"/><stop offset="1.000" stop-color="#fee496"/></linearGradient><linearGradient id="g84" gradientUnits="userSpaceOnUse" x1="721.4" y1="530.3" x2="718.2" y2="511.5"><stop offset="0.000" stop-color="#7eb5d6"/><stop offset="1.000" stop-color="#9ccde2"/></linearGradient><linearGradient id="g85" gradientUnits="userSpaceOnUse" x1="685.3" y1="527.3" x2="681.3" y2="508.2"><stop offset="0.000" stop-color="#8cc0dc"/><stop offset="0.915" stop-color="#abd9e9"/><stop offset="1.000" stop-color="#aedaea"/></linearGradient><linearGradient id="g86" gradientUnits="userSpaceOnUse" x1="557.1" y1="477.5" x2="551.7" y2="457.8"><stop offset="0.000" stop-color="#fee496"/><stop offset="0.161" stop-color="#fee090"/><stop offset="1.000" stop-color="#fdbc6f"/></linearGradient><linearGradient id="g87" gradientUnits="userSpaceOnUse" x1="650.2" y1="521.6" x2="642.5" y2="503.3"><stop offset="0.000" stop-color="#a7d6e7"/><stop offset="0.133" stop-color="#abd9e9"/><stop offset="1.000" stop-color="#c2e4f0"/></linearGradient><linearGradient id="g88" gradientUnits="userSpaceOnUse" x1="920.1" y1="530.0" x2="923.3" y2="543.8"><stop offset="0.000" stop-color="#598dc1"/><stop offset="1.000" stop-color="#5f94c4"/></linearGradient><linearGradient id="g89" gradientUnits="userSpaceOnUse" x1="885.4" y1="532.2" x2="885.3" y2="542.6"><stop offset="0.000" stop-color="#5689be"/><stop offset="1.000" stop-color="#6196c5"/></linearGradient><linearGradient id="g90" gradientUnits="userSpaceOnUse" x1="849.5" y1="532.6" x2="848.3" y2="542.4"><stop offset="0.000" stop-color="#598cc0"/><stop offset="1.000" stop-color="#6398c6"/></linearGradient><linearGradient id="g91" gradientUnits="userSpaceOnUse" x1="612.9" y1="514.7" x2="604.8" y2="491.7"><stop offset="0.000" stop-color="#c3e5f0"/><stop offset="0.563" stop-color="#e0f3f8"/><stop offset="1.000" stop-color="#edf8df"/></linearGradient><linearGradient id="g92" gradientUnits="userSpaceOnUse" x1="823.6" y1="527.8" x2="801.2" y2="544.5"><stop offset="0.000" stop-color="#5f94c4"/><stop offset="1.000" stop-color="#6aa1cb"/></linearGradient><linearGradient id="g93" gradientUnits="userSpaceOnUse" x1="779.6" y1="541.9" x2="771.5" y2="525.3"><stop offset="0.000" stop-color="#6aa1cb"/><stop offset="0.889" stop-color="#74add1"/><stop offset="1.000" stop-color="#75aed2"/></linearGradient><linearGradient id="g94" gradientUnits="userSpaceOnUse" x1="740.2" y1="540.4" x2="736.9" y2="522.4"><stop offset="0.000" stop-color="#71a9cf"/><stop offset="0.184" stop-color="#74add1"/><stop offset="1.000" stop-color="#85bbd9"/></linearGradient><linearGradient id="g95" gradientUnits="userSpaceOnUse" x1="574.2" y1="501.4" x2="566.3" y2="473.1"><stop offset="0.000" stop-color="#edf8df"/><stop offset="0.374" stop-color="#ffffbf"/><stop offset="1.000" stop-color="#fee293"/></linearGradient><linearGradient id="g96" gradientUnits="userSpaceOnUse" x1="703.2" y1="538.8" x2="699.5" y2="520.0"><stop offset="0.000" stop-color="#79b1d3"/><stop offset="1.000" stop-color="#93c6de"/></linearGradient><linearGradient id="g97" gradientUnits="userSpaceOnUse" x1="668.1" y1="534.4" x2="659.2" y2="514.7"><stop offset="0.000" stop-color="#8dc1dc"/><stop offset="1.000" stop-color="#abd9e9"/></linearGradient><linearGradient id="g98" gradientUnits="userSpaceOnUse" x1="630.7" y1="528.1" x2="620.4" y2="507.4"><stop offset="0.000" stop-color="#abd9e9"/><stop offset="1.000" stop-color="#c8e7f1"/></linearGradient><linearGradient id="g99" gradientUnits="userSpaceOnUse" x1="908.9" y1="537.8" x2="908.2" y2="547.8"><stop offset="0.000" stop-color="#5a8fc1"/><stop offset="1.000" stop-color="#679dc9"/></linearGradient><linearGradient id="g100" gradientUnits="userSpaceOnUse" x1="871.3" y1="537.8" x2="871.2" y2="547.3"><stop offset="0.000" stop-color="#5b8fc1"/><stop offset="1.000" stop-color="#6ba2cb"/></linearGradient><linearGradient id="g101" gradientUnits="userSpaceOnUse" x1="834.1" y1="537.4" x2="833.4" y2="548.5"><stop offset="0.000" stop-color="#5f94c4"/><stop offset="1.000" stop-color="#69a0ca"/></linearGradient><linearGradient id="g102" gradientUnits="userSpaceOnUse" x1="590.6" y1="519.6" x2="583.1" y2="497.0"><stop offset="0.000" stop-color="#c9e7f1"/><stop offset="0.467" stop-color="#e0f3f8"/><stop offset="1.000" stop-color="#f0f9db"/></linearGradient><linearGradient id="g103" gradientUnits="userSpaceOnUse" x1="804.8" y1="552.0" x2="787.3" y2="532.7"><stop offset="0.000" stop-color="#659bc8"/><stop offset="1.000" stop-color="#6ba2cb"/></linearGradient><linearGradient id="g104" gradientUnits="userSpaceOnUse" x1="760.0" y1="550.0" x2="756.4" y2="532.5"><stop offset="0.000" stop-color="#689fca"/><stop offset="0.944" stop-color="#74add1"/><stop offset="1.000" stop-color="#75aed1"/></linearGradient><linearGradient id="g105" gradientUnits="userSpaceOnUse" x1="721.7" y1="549.3" x2="718.6" y2="530.8"><stop offset="0.000" stop-color="#6ca4cc"/><stop offset="0.457" stop-color="#74add1"/><stop offset="1.000" stop-color="#7fb6d6"/></linearGradient><linearGradient id="g106" gradientUnits="userSpaceOnUse" x1="687.9" y1="547.0" x2="675.5" y2="526.1"><stop offset="0.000" stop-color="#79b1d3"/><stop offset="1.000" stop-color="#91c4de"/></linearGradient><linearGradient id="g107" gradientUnits="userSpaceOnUse" x1="649.2" y1="541.4" x2="636.6" y2="519.0"><stop offset="0.000" stop-color="#91c4de"/><stop offset="0.785" stop-color="#abd9e9"/><stop offset="1.000" stop-color="#b2dceb"/></linearGradient><linearGradient id="g108" gradientUnits="userSpaceOnUse" x1="607.5" y1="532.9" x2="599.7" y2="513.7"><stop offset="0.000" stop-color="#b2dceb"/><stop offset="1.000" stop-color="#cce9f2"/></linearGradient><linearGradient id="g109" gradientUnits="userSpaceOnUse" x1="895.3" y1="543.2" x2="894.4" y2="552.4"><stop offset="0.000" stop-color="#6297c6"/><stop offset="1.000" stop-color="#72aad0"/></linearGradient><linearGradient id="g110" gradientUnits="userSpaceOnUse" x1="856.0" y1="542.6" x2="856.8" y2="553.2"><stop offset="0.000" stop-color="#6298c6"/><stop offset="1.000" stop-color="#74add1"/></linearGradient><linearGradient id="g111" gradientUnits="userSpaceOnUse" x1="816.6" y1="542.6" x2="818.8" y2="556.0"><stop offset="0.000" stop-color="#659bc7"/><stop offset="1.000" stop-color="#6ca4cc"/></linearGradient><linearGradient id="g112" gradientUnits="userSpaceOnUse" x1="780.0" y1="558.5" x2="777.7" y2="541.7"><stop offset="0.000" stop-color="#659bc8"/><stop offset="1.000" stop-color="#6aa2cb"/></linearGradient><linearGradient id="g113" gradientUnits="userSpaceOnUse" x1="741.2" y1="559.4" x2="738.6" y2="540.7"><stop offset="0.000" stop-color="#649ac7"/><stop offset="1.000" stop-color="#71a9cf"/></linearGradient><linearGradient id="g114" gradientUnits="userSpaceOnUse" x1="711.1" y1="558.4" x2="690.0" y2="536.6"><stop offset="0.000" stop-color="#6da4cd"/><stop offset="0.444" stop-color="#74add1"/><stop offset="1.000" stop-color="#7fb6d6"/></linearGradient><linearGradient id="g115" gradientUnits="userSpaceOnUse" x1="672.0" y1="553.9" x2="649.9" y2="530.9"><stop offset="0.000" stop-color="#7fb6d6"/><stop offset="1.000" stop-color="#99cbe1"/></linearGradient><linearGradient id="g116" gradientUnits="userSpaceOnUse" x1="625.4" y1="546.3" x2="616.3" y2="525.9"><stop offset="0.000" stop-color="#99cbe1"/><stop offset="0.626" stop-color="#abd9e9"/><stop offset="1.000" stop-color="#b5deec"/></linearGradient><linearGradient id="g117" gradientUnits="userSpaceOnUse" x1="880.5" y1="547.6" x2="880.1" y2="558.4"><stop offset="0.000" stop-color="#6ca3cc"/><stop offset="0.549" stop-color="#74add1"/><stop offset="1.000" stop-color="#7cb3d4"/></linearGradient><linearGradient id="g118" gradientUnits="userSpaceOnUse" x1="839.2" y1="548.2" x2="841.8" y2="560.1"><stop offset="0.000" stop-color="#69a0ca"/><stop offset="0.691" stop-color="#74add1"/><stop offset="1.000" stop-color="#7ab2d4"/></linearGradient><linearGradient id="g119" gradientUnits="userSpaceOnUse" x1="797.3" y1="550.2" x2="804.0" y2="563.9"><stop offset="0.000" stop-color="#669cc8"/><stop offset="1.000" stop-color="#6da5cd"/></linearGradient><linearGradient id="g120" gradientUnits="userSpaceOnUse" x1="759.9" y1="568.0" x2="761.3" y2="550.3"><stop offset="0.000" stop-color="#6297c6"/><stop offset="1.000" stop-color="#689fca"/></linearGradient><linearGradient id="g121" gradientUnits="userSpaceOnUse" x1="736.9" y1="566.6" x2="703.9" y2="549.1"><stop offset="0.000" stop-color="#649ac7"/><stop offset="1.000" stop-color="#72abd0"/></linearGradient><linearGradient id="g122" gradientUnits="userSpaceOnUse" x1="699.6" y1="558.5" x2="660.1" y2="548.4"><stop offset="0.000" stop-color="#72abd0"/><stop offset="0.087" stop-color="#74add1"/><stop offset="1.000" stop-color="#89beda"/></linearGradient><linearGradient id="g123" gradientUnits="userSpaceOnUse" x1="645.9" y1="559.5" x2="631.9" y2="537.5"><stop offset="0.000" stop-color="#89beda"/><stop offset="1.000" stop-color="#9ecee3"/></linearGradient><linearGradient id="g124" gradientUnits="userSpaceOnUse" x1="864.5" y1="552.7" x2="865.1" y2="565.3"><stop offset="0.000" stop-color="#74add1"/><stop offset="0.022" stop-color="#74add1"/><stop offset="1.000" stop-color="#84bad8"/></linearGradient><linearGradient id="g125" gradientUnits="userSpaceOnUse" x1="821.6" y1="555.4" x2="825.8" y2="567.5"><stop offset="0.000" stop-color="#6ca3cc"/><stop offset="0.485" stop-color="#74add1"/><stop offset="1.000" stop-color="#7eb5d6"/></linearGradient><linearGradient id="g126" gradientUnits="userSpaceOnUse" x1="770.2" y1="557.0" x2="794.8" y2="575.2"><stop offset="0.000" stop-color="#6297c6"/><stop offset="1.000" stop-color="#6ea5cd"/></linearGradient><linearGradient id="g127" gradientUnits="userSpaceOnUse" x1="747.6" y1="558.2" x2="735.0" y2="576.4"><stop offset="0.000" stop-color="#6298c6"/><stop offset="1.000" stop-color="#6aa1cb"/></linearGradient><linearGradient id="g128" gradientUnits="userSpaceOnUse" x1="718.4" y1="558.7" x2="681.1" y2="569.3"><stop offset="0.000" stop-color="#6aa1cb"/><stop offset="0.556" stop-color="#74add1"/><stop offset="1.000" stop-color="#7eb5d5"/></linearGradient><linearGradient id="g129" gradientUnits="userSpaceOnUse" x1="672.5" y1="570.3" x2="643.1" y2="549.0"><stop offset="0.000" stop-color="#7eb5d5"/><stop offset="1.000" stop-color="#8fc2dd"/></linearGradient><linearGradient id="g130" gradientUnits="userSpaceOnUse" x1="847.3" y1="559.1" x2="849.2" y2="572.6"><stop offset="0.000" stop-color="#7ab2d4"/><stop offset="1.000" stop-color="#8cc0db"/></linearGradient><linearGradient id="g131" gradientUnits="userSpaceOnUse" x1="800.9" y1="563.1" x2="810.8" y2="577.9"><stop offset="0.000" stop-color="#6ba2cb"/><stop offset="0.469" stop-color="#74add1"/><stop offset="1.000" stop-color="#80b7d6"/></linearGradient><linearGradient id="g132" gradientUnits="userSpaceOnUse" x1="762.9" y1="568.0" x2="763.8" y2="580.7"><stop offset="0.000" stop-color="#6196c5"/><stop offset="1.000" stop-color="#72abd0"/></linearGradient><linearGradient id="g133" gradientUnits="userSpaceOnUse" x1="723.4" y1="567.4" x2="718.0" y2="580.0"><stop offset="0.000" stop-color="#69a0ca"/><stop offset="0.916" stop-color="#74add1"/><stop offset="1.000" stop-color="#75aed2"/></linearGradient><linearGradient id="g134" gradientUnits="userSpaceOnUse" x1="699.2" y1="572.8" x2="656.2" y2="568.0"><stop offset="0.000" stop-color="#75aed1"/><stop offset="1.000" stop-color="#85bbd8"/></linearGradient><linearGradient id="g135" gradientUnits="userSpaceOnUse" x1="826.4" y1="566.9" x2="834.8" y2="582.0"><stop offset="0.000" stop-color="#7fb6d6"/><stop offset="1.000" stop-color="#8ec1dc"/></linearGradient><linearGradient id="g136" gradientUnits="userSpaceOnUse" x1="786.1" y1="573.7" x2="787.4" y2="582.8"><stop offset="0.000" stop-color="#699fca"/><stop offset="0.363" stop-color="#74add1"/><stop offset="1.000" stop-color="#8bc0db"/></linearGradient><linearGradient id="g137" gradientUnits="userSpaceOnUse" x1="742.9" y1="575.3" x2="742.8" y2="585.1"><stop offset="0.000" stop-color="#679dc9"/><stop offset="0.476" stop-color="#74add1"/><stop offset="1.000" stop-color="#85bbd8"/></linearGradient><linearGradient id="g138" gradientUnits="userSpaceOnUse" x1="700.7" y1="572.5" x2="696.8" y2="587.4"><stop offset="0.000" stop-color="#74add1"/><stop offset="1.000" stop-color="#80b7d6"/></linearGradient><linearGradient id="g139" gradientUnits="userSpaceOnUse" x1="811.7" y1="576.8" x2="811.8" y2="586.8"><stop offset="0.000" stop-color="#7db4d5"/><stop offset="1.000" stop-color="#9fd0e4"/></linearGradient><linearGradient id="g140" gradientUnits="userSpaceOnUse" x1="766.2" y1="580.5" x2="766.6" y2="585.8"><stop offset="0.000" stop-color="#70a9cf"/><stop offset="0.084" stop-color="#74add1"/><stop offset="1.000" stop-color="#a1d1e5"/></linearGradient><linearGradient id="g141" gradientUnits="userSpaceOnUse" x1="720.4" y1="580.8" x2="721.5" y2="591.3"><stop offset="0.000" stop-color="#74add1"/><stop offset="1.000" stop-color="#95c7df"/></linearGradient><linearGradient id="g142" gradientUnits="userSpaceOnUse" x1="791.8" y1="582.7" x2="791.6" y2="588.5"><stop offset="0.000" stop-color="#8bbfdb"/><stop offset="0.670" stop-color="#abd9e9"/><stop offset="1.000" stop-color="#bae1ed"/></linearGradient><linearGradient id="g143" gradientUnits="userSpaceOnUse" x1="744.1" y1="585.1" x2="745.0" y2="590.5"><stop offset="0.000" stop-color="#84bad8"/><stop offset="0.771" stop-color="#abd9e9"/><stop offset="1.000" stop-color="#b6dfec"/></linearGradient><linearGradient id="g144" gradientUnits="userSpaceOnUse" x1="769.9" y1="585.6" x2="770.2" y2="592.1"><stop offset="0.000" stop-color="#a4d4e6"/><stop offset="0.133" stop-color="#abd9e9"/><stop offset="1.000" stop-color="#d4edf5"/></linearGradient></defs><g stroke="#24241a" stroke-opacity="0.66" stroke-width="1.0"><polygon points="732.1,403.7 747.0,416.7 760.6,409.9 745.7,396.4" fill="url(#g1)"/><polygon points="747.0,416.7 762.4,440.6 775.7,434.3 760.6,409.9" fill="url(#g2)"/><polygon points="718.0,414.0 733.0,426.4 747.0,416.7 732.1,403.7" fill="url(#g3)"/><polygon points="762.4,440.6 778.1,457.3 791.3,451.3 775.7,434.3" fill="url(#g4)"/><polygon points="733.0,426.4 748.5,449.7 762.4,440.6 747.0,416.7" fill="url(#g5)"/><polygon points="703.4,422.4 718.4,434.2 733.0,426.4 718.0,414.0" fill="url(#g6)"/><polygon points="778.1,457.3 794.4,468.0 807.5,462.2 791.3,451.3" fill="url(#g7)"/><polygon points="748.5,449.7 764.3,465.9 778.1,457.3 762.4,440.6" fill="url(#g8)"/><polygon points="718.4,434.2 734.0,456.9 748.5,449.7 733.0,426.4" fill="url(#g9)"/><polygon points="794.4,468.0 811.2,480.2 824.1,474.5 807.5,462.2" fill="url(#g10)"/><polygon points="688.0,426.0 703.1,437.7 718.4,434.2 703.4,422.4" fill="url(#g11)"/><polygon points="764.3,465.9 780.7,476.4 794.4,468.0 778.1,457.3" fill="url(#g12)"/><polygon points="734.0,456.9 749.9,472.7 764.3,465.9 748.5,449.7" fill="url(#g13)"/><polygon points="703.1,437.7 718.8,460.2 734.0,456.9 718.4,434.2" fill="url(#g14)"/><polygon points="811.2,480.2 828.6,491.3 841.4,485.6 824.1,474.5" fill="url(#g15)"/><polygon points="780.7,476.4 797.6,488.3 811.2,480.2 794.4,468.0" fill="url(#g16)"/><polygon points="671.9,429.1 687.0,440.8 703.1,437.7 688.0,426.0" fill="url(#g17)"/><polygon points="749.9,472.7 766.4,482.9 780.7,476.4 764.3,465.9" fill="url(#g18)"/><polygon points="718.8,460.2 734.9,475.9 749.9,472.7 734.0,456.9" fill="url(#g19)"/><polygon points="828.6,491.3 846.9,500.4 859.5,494.6 841.4,485.6" fill="url(#g20)"/><polygon points="797.6,488.3 815.2,499.0 828.6,491.3 811.2,480.2" fill="url(#g21)"/><polygon points="687.0,440.8 702.9,463.2 718.8,460.2 703.1,437.7" fill="url(#g22)"/><polygon points="766.4,482.9 783.5,494.5 797.6,488.3 780.7,476.4" fill="url(#g23)"/><polygon points="734.9,475.9 751.5,486.0 766.4,482.9 749.9,472.7" fill="url(#g24)"/><polygon points="655.1,432.3 670.2,444.1 687.0,440.8 671.9,429.1" fill="url(#g25)"/><polygon points="702.9,463.2 719.1,478.8 734.9,475.9 718.8,460.2" fill="url(#g26)"/><polygon points="846.9,500.4 865.9,507.4 878.3,501.4 859.5,494.6" fill="url(#g27)"/><polygon points="815.2,499.0 833.6,507.6 846.9,500.4 828.6,491.3" fill="url(#g28)"/><polygon points="783.5,494.5 801.3,505.0 815.2,499.0 797.6,488.3" fill="url(#g29)"/><polygon points="670.2,444.1 686.3,466.5 702.9,463.2 687.0,440.8" fill="url(#g30)"/><polygon points="751.5,486.0 768.7,497.7 783.5,494.5 766.4,482.9" fill="url(#g31)"/><polygon points="637.5,438.4 652.7,450.3 670.2,444.1 655.1,432.3" fill="url(#g32)"/><polygon points="719.1,478.8 735.8,489.0 751.5,486.0 734.9,475.9" fill="url(#g33)"/><polygon points="865.9,507.4 885.8,513.4 898.1,507.1 878.3,501.4" fill="url(#g34)"/><polygon points="686.3,466.5 702.6,482.3 719.1,478.8 702.9,463.2" fill="url(#g35)"/><polygon points="833.6,507.6 852.9,514.2 865.9,507.4 846.9,500.4" fill="url(#g36)"/><polygon points="801.3,505.0 819.8,513.4 833.6,507.6 815.2,499.0" fill="url(#g37)"/><polygon points="768.7,497.7 786.6,508.3 801.3,505.0 783.5,494.5" fill="url(#g38)"/><polygon points="652.7,450.3 668.9,472.8 686.3,466.5 670.2,444.1" fill="url(#g39)"/><polygon points="735.8,489.0 753.2,500.8 768.7,497.7 751.5,486.0" fill="url(#g40)"/><polygon points="619.3,446.4 634.5,458.5 652.7,450.3 637.5,438.4" fill="url(#g41)"/><polygon points="702.6,482.3 719.4,492.8 735.8,489.0 719.1,478.8" fill="url(#g42)"/><polygon points="885.8,513.4 906.8,518.4 918.8,511.6 898.1,507.1" fill="url(#g43)"/><polygon points="852.9,514.2 873.0,520.2 885.8,513.4 865.9,507.4" fill="url(#g44)"/><polygon points="819.8,513.4 839.2,520.2 852.9,514.2 833.6,507.6" fill="url(#g45)"/><polygon points="668.9,472.8 685.3,488.6 702.6,482.3 686.3,466.5" fill="url(#g46)"/><polygon points="786.6,508.3 805.4,517.5 819.8,513.4 801.3,505.0" fill="url(#g47)"/><polygon points="634.5,458.5 650.7,481.0 668.9,472.8 652.7,450.3" fill="url(#g48)"/><polygon points="753.2,500.8 771.3,511.6 786.6,508.3 768.7,497.7" fill="url(#g49)"/><polygon points="719.4,492.8 736.9,504.7 753.2,500.8 735.8,489.0" fill="url(#g50)"/><polygon points="600.1,451.8 615.3,464.7 634.5,458.5 619.3,446.4" fill="url(#g51)"/><polygon points="685.3,488.6 702.1,499.2 719.4,492.8 702.6,482.3" fill="url(#g52)"/><polygon points="906.8,518.4 928.8,523.1 940.6,515.7 918.8,511.6" fill="url(#g53)"/><polygon points="873.0,520.2 894.2,525.7 906.8,518.4 885.8,513.4" fill="url(#g54)"/><polygon points="839.2,520.2 859.6,526.5 873.0,520.2 852.9,514.2" fill="url(#g55)"/><polygon points="650.7,481.0 667.2,496.9 685.3,488.6 668.9,472.8" fill="url(#g56)"/><polygon points="805.4,517.5 824.9,525.2 839.2,520.2 819.8,513.4" fill="url(#g57)"/><polygon points="771.3,511.6 790.1,521.2 805.4,517.5 786.6,508.3" fill="url(#g58)"/><polygon points="615.3,464.7 631.6,487.7 650.7,481.0 634.5,458.5" fill="url(#g59)"/><polygon points="736.9,504.7 755.1,515.7 771.3,511.6 753.2,500.8" fill="url(#g60)"/><polygon points="579.7,455.4 594.9,468.9 615.3,464.7 600.1,451.8" fill="url(#g61)"/><polygon points="702.1,499.2 719.7,511.2 736.9,504.7 719.4,492.8" fill="url(#g62)"/><polygon points="667.2,496.9 684.0,507.6 702.1,499.2 685.3,488.6" fill="url(#g63)"/><polygon points="928.8,523.1 951.8,527.7 963.4,519.4 940.6,515.7" fill="url(#g64)"/><polygon points="894.2,525.7 916.4,530.9 928.8,523.1 906.8,518.4" fill="url(#g65)"/><polygon points="859.6,526.5 880.9,532.2 894.2,525.7 873.0,520.2" fill="url(#g66)"/><polygon points="824.9,525.2 845.5,532.1 859.6,526.5 839.2,520.2" fill="url(#g67)"/><polygon points="631.6,487.7 648.1,504.2 667.2,496.9 650.7,481.0" fill="url(#g68)"/><polygon points="790.1,521.2 809.9,529.7 824.9,525.2 805.4,517.5" fill="url(#g69)"/><polygon points="755.1,515.7 774.1,525.7 790.1,521.2 771.3,511.6" fill="url(#g70)"/><polygon points="594.9,468.9 611.3,492.5 631.6,487.7 615.3,464.7" fill="url(#g71)"/><polygon points="719.7,511.2 738.0,522.2 755.1,515.7 736.9,504.7" fill="url(#g72)"/><polygon points="684.0,507.6 701.6,519.6 719.7,511.2 702.1,499.2" fill="url(#g73)"/><polygon points="558.2,458.8 573.4,473.0 594.9,468.9 579.7,455.4" fill="url(#g74)"/><polygon points="648.1,504.2 665.0,515.5 684.0,507.6 667.2,496.9" fill="url(#g75)"/><polygon points="916.4,530.9 939.7,536.2 951.8,527.7 928.8,523.1" fill="url(#g76)"/><polygon points="880.9,532.2 903.4,537.4 916.4,530.9 894.2,525.7" fill="url(#g77)"/><polygon points="845.5,532.1 867.1,537.8 880.9,532.2 859.6,526.5" fill="url(#g78)"/><polygon points="611.3,492.5 627.9,509.4 648.1,504.2 631.6,487.7" fill="url(#g79)"/><polygon points="809.9,529.7 830.6,537.2 845.5,532.1 824.9,525.2" fill="url(#g80)"/><polygon points="774.1,525.7 794.0,534.9 809.9,529.7 790.1,521.2" fill="url(#g81)"/><polygon points="738.0,522.2 757.1,532.3 774.1,525.7 755.1,515.7" fill="url(#g82)"/><polygon points="573.4,473.0 589.9,497.0 611.3,492.5 594.9,468.9" fill="url(#g83)"/><polygon points="701.6,519.6 720.0,530.6 738.0,522.2 719.7,511.2" fill="url(#g84)"/><polygon points="665.0,515.5 682.6,527.9 701.6,519.6 684.0,507.6" fill="url(#g85)"/><polygon points="535.5,462.2 550.7,477.4 573.4,473.0 558.2,458.8" fill="url(#g86)"/><polygon points="627.9,509.4 644.8,521.1 665.0,515.5 648.1,504.2" fill="url(#g87)"/><polygon points="903.4,537.4 927.1,542.9 939.7,536.2 916.4,530.9" fill="url(#g88)"/><polygon points="867.1,537.8 889.9,542.7 903.4,537.4 880.9,532.2" fill="url(#g89)"/><polygon points="830.6,537.2 852.5,542.9 867.1,537.8 845.5,532.1" fill="url(#g90)"/><polygon points="589.9,497.0 606.5,514.3 627.9,509.4 611.3,492.5" fill="url(#g91)"/><polygon points="794.0,534.9 814.9,542.9 830.6,537.2 809.9,529.7" fill="url(#g92)"/><polygon points="757.1,532.3 777.2,541.8 794.0,534.9 774.1,525.7" fill="url(#g93)"/><polygon points="720.0,530.6 739.2,540.6 757.1,532.3 738.0,522.2" fill="url(#g94)"/><polygon points="550.7,477.4 567.3,502.2 589.9,497.0 573.4,473.0" fill="url(#g95)"/><polygon points="682.6,527.9 701.0,539.2 720.0,530.6 701.6,519.6" fill="url(#g96)"/><polygon points="644.8,521.1 662.5,533.9 682.6,527.9 665.0,515.5" fill="url(#g97)"/><polygon points="606.5,514.3 623.4,526.4 644.8,521.1 627.9,509.4" fill="url(#g98)"/><polygon points="889.9,542.7 913.9,548.2 927.1,542.9 903.4,537.4" fill="url(#g99)"/><polygon points="852.5,542.9 875.6,547.4 889.9,542.7 867.1,537.8" fill="url(#g100)"/><polygon points="814.9,542.9 837.0,548.7 852.5,542.9 830.6,537.2" fill="url(#g101)"/><polygon points="567.3,502.2 583.9,520.1 606.5,514.3 589.9,497.0" fill="url(#g102)"/><polygon points="777.2,541.8 798.3,550.0 814.9,542.9 794.0,534.9" fill="url(#g103)"/><polygon points="739.2,540.6 759.4,550.2 777.2,541.8 757.1,532.3" fill="url(#g104)"/><polygon points="701.0,539.2 720.3,549.5 739.2,540.6 720.0,530.6" fill="url(#g105)"/><polygon points="662.5,533.9 680.9,545.4 701.0,539.2 682.6,527.9" fill="url(#g106)"/><polygon points="623.4,526.4 641.0,539.4 662.5,533.9 644.8,521.1" fill="url(#g107)"/><polygon points="583.9,520.1 600.7,532.8 623.4,526.4 606.5,514.3" fill="url(#g108)"/><polygon points="875.6,547.4 900.0,552.9 913.9,548.2 889.9,542.7" fill="url(#g109)"/><polygon points="837.0,548.7 860.4,552.9 875.6,547.4 852.5,542.9" fill="url(#g110)"/><polygon points="798.3,550.0 820.6,555.8 837.0,548.7 814.9,542.9" fill="url(#g111)"/><polygon points="759.4,550.2 780.6,558.4 798.3,550.0 777.2,541.8" fill="url(#g112)"/><polygon points="720.3,549.5 740.6,559.5 759.4,550.2 739.2,540.6" fill="url(#g113)"/><polygon points="680.9,545.4 700.3,556.0 720.3,549.5 701.0,539.2" fill="url(#g114)"/><polygon points="641.0,539.4 659.5,550.9 680.9,545.4 662.5,533.9" fill="url(#g115)"/><polygon points="600.7,532.8 618.4,546.1 641.0,539.4 623.4,526.4" fill="url(#g116)"/><polygon points="860.4,552.9 885.1,558.6 900.0,552.9 875.6,547.4" fill="url(#g117)"/><polygon points="820.6,555.8 844.3,559.6 860.4,552.9 837.0,548.7" fill="url(#g118)"/><polygon points="780.6,558.4 803.1,564.0 820.6,555.8 798.3,550.0" fill="url(#g119)"/><polygon points="740.6,559.5 761.9,568.1 780.6,558.4 759.4,550.2" fill="url(#g120)"/><polygon points="700.3,556.0 720.6,566.5 740.6,559.5 720.3,549.5" fill="url(#g121)"/><polygon points="659.5,550.9 678.9,561.5 700.3,556.0 680.9,545.4" fill="url(#g122)"/><polygon points="618.4,546.1 636.8,557.7 659.5,550.9 641.0,539.4" fill="url(#g123)"/><polygon points="844.3,559.6 869.3,565.1 885.1,558.6 860.4,552.9" fill="url(#g124)"/><polygon points="803.1,564.0 827.0,567.1 844.3,559.6 820.6,555.8" fill="url(#g125)"/><polygon points="761.9,568.1 784.5,573.9 803.1,564.0 780.6,558.4" fill="url(#g126)"/><polygon points="720.6,566.5 742.1,575.3 761.9,568.1 740.6,559.5" fill="url(#g127)"/><polygon points="678.9,561.5 699.3,572.2 720.6,566.5 700.3,556.0" fill="url(#g128)"/><polygon points="636.8,557.7 656.2,568.5 678.9,561.5 659.5,550.9" fill="url(#g129)"/><polygon points="827.0,567.1 852.4,572.1 869.3,565.1 844.3,559.6" fill="url(#g130)"/><polygon points="784.5,573.9 808.6,576.9 827.0,567.1 803.1,564.0" fill="url(#g131)"/><polygon points="742.1,575.3 764.8,580.6 784.5,573.9 761.9,568.1" fill="url(#g132)"/><polygon points="699.3,572.2 720.9,580.8 742.1,575.3 720.6,566.5" fill="url(#g133)"/><polygon points="656.2,568.5 676.6,579.3 699.3,572.2 678.9,561.5" fill="url(#g134)"/><polygon points="808.6,576.9 834.3,581.8 852.4,572.1 827.0,567.1" fill="url(#g135)"/><polygon points="764.8,580.6 789.1,582.6 808.6,576.9 784.5,573.9" fill="url(#g136)"/><polygon points="720.9,580.8 743.7,585.2 764.8,580.6 742.1,575.3" fill="url(#g137)"/><polygon points="676.6,579.3 698.2,587.7 720.9,580.8 699.3,572.2" fill="url(#g138)"/><polygon points="789.1,582.6 815.0,586.8 834.3,581.8 808.6,576.9" fill="url(#g139)"/><polygon points="743.7,585.2 768.2,585.6 789.1,582.6 764.8,580.6" fill="url(#g140)"/><polygon points="698.2,587.7 721.0,591.4 743.7,585.2 720.9,580.8" fill="url(#g141)"/><polygon points="768.2,585.6 794.4,588.6 815.0,586.8 789.1,582.6" fill="url(#g142)"/><polygon points="721.0,591.4 745.6,590.5 768.2,585.6 743.7,585.2" fill="url(#g143)"/><polygon points="745.6,590.5 772.0,592.0 794.4,588.6 768.2,585.6" fill="url(#g144)"/></g></g>
<mask id="pm" maskUnits="userSpaceOnUse" x="500" y="380" width="520" height="240"><g fill="#fff" stroke="#fff" stroke-width="1.6" stroke-linejoin="round"><polygon points="537.7,484.6 538.9,485.0 552.0,481.8 550.9,481.4"/><polygon points="538.9,485.0 540.0,485.5 551.3,482.7 550.2,482.3"/><polygon points="540.0,485.5 541.2,485.9 552.5,483.1 551.3,482.7"/><polygon points="541.2,485.9 542.4,486.3 553.7,483.6 552.5,483.1"/><polygon points="542.4,486.3 543.5,486.8 553.0,484.4 551.8,484.0"/><polygon points="543.5,486.8 544.7,487.2 554.2,484.9 553.0,484.4"/><polygon points="544.7,487.2 545.9,487.7 553.5,485.8 552.3,485.3"/><polygon points="545.9,487.7 547.1,488.1 554.7,486.2 553.5,485.8"/><polygon points="547.1,488.1 548.3,488.5 555.9,486.6 554.7,486.2"/><polygon points="548.3,488.5 549.5,489.0 555.2,487.6 554.0,487.1"/><polygon points="549.5,489.0 550.7,489.4 556.4,488.0 555.2,487.6"/><polygon points="550.7,489.4 551.9,489.9 555.7,488.9 554.5,488.5"/><polygon points="551.9,489.9 553.1,490.3 556.9,489.4 555.7,488.9"/><polygon points="553.1,490.3 554.3,490.8 556.2,490.3 555.0,489.9"/><polygon points="554.3,490.8 555.5,491.2 557.4,490.8 556.2,490.3"/><polygon points="555.5,491.2 556.7,491.7 558.7,491.2 557.4,490.8"/><polygon points="556.7,491.7 558.0,492.2 559.9,491.7 558.7,491.2"/><polygon points="621.7,476.4 623.0,476.8 626.3,476.0 625.0,475.6"/><polygon points="590.2,485.3 591.5,485.8 602.1,483.0 600.9,482.6"/><polygon points="602.6,482.1 603.9,482.5 646.7,471.4 645.5,471.0"/><polygon points="561.7,493.5 562.9,494.0 654.2,470.1 652.9,469.8"/><polygon points="654.5,469.4 655.8,469.7 657.3,469.3 656.0,469.0"/><polygon points="562.9,494.0 564.2,494.5 664.6,468.1 663.3,467.8"/><polygon points="718.7,453.3 720.0,453.6 721.3,453.2 720.0,452.9"/><polygon points="721.3,452.6 722.5,452.9 725.1,452.2 723.8,451.9"/><polygon points="726.3,451.3 727.6,451.6 733.8,450.0 732.5,449.7"/><polygon points="564.2,494.5 565.5,495.0 679.1,465.0 677.8,464.6"/><polygon points="679.3,464.3 680.6,464.6 682.0,464.2 680.7,463.9"/><polygon points="682.2,463.5 683.5,463.9 684.9,463.5 683.6,463.1"/><polygon points="690.6,461.3 691.9,461.6 693.3,461.3 692.0,460.9"/><polygon points="697.5,459.5 698.8,459.8 700.2,459.5 698.9,459.1"/><polygon points="700.2,458.8 701.5,459.1 742.4,448.3 741.1,448.0"/><polygon points="565.5,495.0 566.7,495.4 750.8,446.7 749.5,446.5"/><polygon points="566.7,495.4 568.0,495.9 755.6,446.1 754.3,445.8"/><polygon points="568.0,495.9 569.3,496.4 758.1,446.1 756.8,445.8"/><polygon points="569.3,496.4 570.6,496.9 762.8,445.4 761.5,445.2"/><polygon points="570.6,496.9 571.9,497.3 766.4,445.1 765.1,444.8"/><polygon points="571.9,497.3 573.1,497.8 772.2,444.2 770.9,443.9"/><polygon points="573.1,497.8 574.4,498.3 779.1,443.0 777.8,442.7"/><polygon points="778.9,442.4 780.2,442.7 781.3,442.4 780.0,442.1"/><polygon points="574.4,498.3 575.8,498.8 784.8,442.0 783.5,441.8"/><polygon points="575.8,498.8 577.1,499.3 786.1,442.3 784.8,442.0"/><polygon points="577.1,499.3 578.4,499.8 787.4,442.6 786.1,442.3"/><polygon points="578.4,499.8 579.7,500.3 788.8,442.9 787.4,442.6"/><polygon points="579.7,500.3 581.0,500.8 790.1,443.1 788.8,442.9"/><polygon points="581.0,500.8 582.4,501.3 791.4,443.4 790.1,443.1"/><polygon points="582.4,501.3 583.7,501.8 792.8,443.7 791.4,443.4"/><polygon points="583.7,501.8 585.1,502.3 794.1,444.0 792.8,443.7"/><polygon points="585.1,502.3 586.4,502.8 795.5,444.2 794.1,444.0"/><polygon points="586.4,502.8 587.8,503.3 796.8,444.5 795.5,444.2"/><polygon points="587.8,503.3 589.1,503.8 798.2,444.8 796.8,444.5"/><polygon points="589.1,503.8 590.5,504.3 799.6,445.1 798.2,444.8"/><polygon points="590.5,504.3 591.9,504.8 800.9,445.4 799.6,445.1"/><polygon points="591.9,504.8 593.3,505.3 802.3,445.7 800.9,445.4"/><polygon points="593.3,505.3 594.7,505.8 803.7,445.9 802.3,445.7"/><polygon points="594.7,505.8 596.1,506.4 805.1,446.2 803.7,445.9"/><polygon points="596.1,506.4 597.5,506.9 806.4,446.5 805.1,446.2"/><polygon points="597.5,506.9 598.9,507.4 807.8,446.8 806.4,446.5"/><polygon points="598.9,507.4 600.3,507.9 809.2,447.1 807.8,446.8"/><polygon points="600.3,507.9 601.7,508.5 810.6,447.4 809.2,447.1"/><polygon points="601.7,508.5 603.1,509.0 812.0,447.7 810.6,447.4"/><polygon points="603.1,509.0 604.6,509.5 813.4,448.0 812.0,447.7"/><polygon points="604.6,509.5 606.0,510.1 814.9,448.2 813.4,448.0"/><polygon points="606.0,510.1 607.5,510.6 816.3,448.5 814.9,448.2"/><polygon points="607.5,510.6 608.9,511.2 817.7,448.8 816.3,448.5"/><polygon points="608.9,511.2 610.4,511.7 819.1,449.1 817.7,448.8"/><polygon points="610.4,511.7 611.9,512.2 820.6,449.4 819.1,449.1"/><polygon points="611.9,512.2 613.3,512.8 822.0,449.7 820.6,449.4"/><polygon points="613.3,512.8 614.8,513.4 823.4,450.0 822.0,449.7"/><polygon points="614.8,513.4 616.3,513.9 824.9,450.3 823.4,450.0"/><polygon points="616.3,513.9 617.8,514.5 826.4,450.6 824.9,450.3"/><polygon points="617.8,514.5 619.3,515.0 827.8,450.9 826.4,450.6"/><polygon points="619.3,515.0 620.8,515.6 829.3,451.2 827.8,450.9"/><polygon points="620.8,515.6 622.3,516.2 830.7,451.5 829.3,451.2"/><polygon points="622.3,516.2 623.8,516.7 832.2,451.8 830.7,451.5"/><polygon points="623.8,516.7 625.4,517.3 833.7,452.1 832.2,451.8"/><polygon points="625.4,517.3 626.9,517.9 835.2,452.4 833.7,452.1"/><polygon points="626.9,517.9 628.5,518.4 836.7,452.8 835.2,452.4"/><polygon points="628.5,518.4 630.0,519.0 838.2,453.1 836.7,452.8"/><polygon points="630.0,519.0 631.6,519.6 839.7,453.4 838.2,453.1"/><polygon points="631.6,519.6 633.1,520.2 841.2,453.7 839.7,453.4"/><polygon points="633.1,520.2 634.7,520.8 842.7,454.0 841.2,453.7"/><polygon points="634.7,520.8 636.3,521.4 844.2,454.3 842.7,454.0"/><polygon points="636.3,521.4 637.9,522.0 845.7,454.6 844.2,454.3"/><polygon points="637.9,522.0 639.5,522.6 847.2,454.9 845.7,454.6"/><polygon points="639.5,522.6 641.1,523.2 848.8,455.2 847.2,454.9"/><polygon points="641.1,523.2 642.7,523.8 850.3,455.6 848.8,455.2"/><polygon points="642.7,523.8 644.3,524.4 851.9,455.9 850.3,455.6"/><polygon points="644.3,524.4 646.0,525.0 853.4,456.2 851.9,455.9"/><polygon points="646.0,525.0 647.6,525.6 855.0,456.5 853.4,456.2"/><polygon points="647.6,525.6 649.3,526.2 856.5,456.8 855.0,456.5"/><polygon points="649.3,526.2 650.9,526.8 858.1,457.2 856.5,456.8"/><polygon points="650.9,526.8 652.6,527.4 859.7,457.5 858.1,457.2"/><polygon points="652.6,527.4 654.2,528.0 861.2,457.8 859.7,457.5"/><polygon points="654.2,528.0 655.9,528.7 862.8,458.1 861.2,457.8"/><polygon points="655.9,528.7 657.6,529.3 864.4,458.5 862.8,458.1"/><polygon points="657.6,529.3 659.3,529.9 866.0,458.8 864.4,458.5"/><polygon points="659.3,529.9 661.0,530.6 867.6,459.1 866.0,458.8"/><polygon points="661.0,530.6 662.7,531.2 869.2,459.5 867.6,459.1"/><polygon points="662.7,531.2 664.4,531.9 870.8,459.8 869.2,459.5"/><polygon points="664.4,531.9 666.2,532.5 872.4,460.1 870.8,459.8"/><polygon points="666.2,532.5 667.9,533.1 874.0,460.5 872.4,460.1"/><polygon points="667.9,533.1 669.7,533.8 875.7,460.8 874.0,460.5"/><polygon points="669.7,533.8 671.4,534.5 877.3,461.1 875.7,460.8"/><polygon points="671.4,534.5 673.2,535.1 878.9,461.5 877.3,461.1"/><polygon points="673.2,535.1 674.9,535.8 880.6,461.8 878.9,461.5"/><polygon points="674.9,535.8 676.7,536.4 882.2,462.2 880.6,461.8"/><polygon points="676.7,536.4 678.5,537.1 883.9,462.5 882.2,462.2"/><polygon points="678.5,537.1 680.3,537.8 885.6,462.8 883.9,462.5"/><polygon points="680.3,537.8 682.1,538.4 887.2,463.2 885.6,462.8"/><polygon points="682.1,538.4 684.0,539.1 888.9,463.5 887.2,463.2"/><polygon points="684.0,539.1 685.8,539.8 890.6,463.9 888.9,463.5"/><polygon points="685.8,539.8 687.6,540.5 892.3,464.2 890.6,463.9"/><polygon points="687.6,540.5 689.5,541.2 894.0,464.6 892.3,464.2"/><polygon points="689.5,541.2 691.3,541.9 895.7,464.9 894.0,464.6"/><polygon points="691.3,541.9 693.2,542.6 897.4,465.3 895.7,464.9"/><polygon points="693.2,542.6 695.1,543.3 899.1,465.6 897.4,465.3"/><polygon points="695.1,543.3 697.0,544.0 900.8,466.0 899.1,465.6"/><polygon points="697.0,544.0 698.9,544.7 902.5,466.3 900.8,466.0"/><polygon points="698.9,544.7 700.8,545.4 904.3,466.7 902.5,466.3"/><polygon points="700.8,545.4 702.7,546.1 906.0,467.1 904.3,466.7"/><polygon points="702.7,546.1 704.6,546.8 907.7,467.4 906.0,467.1"/><polygon points="704.6,546.8 706.5,547.5 909.5,467.8 907.7,467.4"/><polygon points="706.5,547.5 708.5,548.3 911.3,468.1 909.5,467.8"/><polygon points="708.5,548.3 710.4,549.0 913.0,468.5 911.3,468.1"/><polygon points="710.4,549.0 712.4,549.7 914.8,468.9 913.0,468.5"/><polygon points="712.4,549.7 714.4,550.5 916.6,469.2 914.8,468.9"/><polygon points="714.4,550.5 716.4,551.2 918.4,469.6 916.6,469.2"/><polygon points="716.4,551.2 718.4,552.0 920.1,470.0 918.4,469.6"/><polygon points="718.4,552.0 720.4,552.7 921.9,470.3 920.1,470.0"/><polygon points="720.4,552.7 722.4,553.5 923.8,470.7 921.9,470.3"/><polygon points="722.4,553.5 724.5,554.2 925.6,471.1 923.8,470.7"/><polygon points="724.5,554.2 726.5,555.0 927.4,471.5 925.6,471.1"/><polygon points="726.5,555.0 728.6,555.8 929.2,471.8 927.4,471.5"/><polygon points="728.6,555.8 730.6,556.5 931.0,472.2 929.2,471.8"/><polygon points="730.6,556.5 732.7,557.3 932.9,472.6 931.0,472.2"/><polygon points="732.7,557.3 734.8,558.1 934.7,473.0 932.9,472.6"/><polygon points="734.8,558.1 736.9,558.9 936.6,473.4 934.7,473.0"/><polygon points="736.9,558.9 739.0,559.6 938.5,473.7 936.6,473.4"/><polygon points="739.0,559.6 741.1,560.4 940.3,474.1 938.5,473.7"/><polygon points="741.1,560.4 743.3,561.2 942.2,474.5 940.3,474.1"/><polygon points="743.3,561.2 745.4,562.0 944.1,474.9 942.2,474.5"/><polygon points="745.4,562.0 747.6,562.8 946.0,475.3 944.1,474.9"/><polygon points="747.6,562.8 749.8,563.7 947.9,475.7 946.0,475.3"/><polygon points="749.8,563.7 751.9,564.5 949.8,476.1 947.9,475.7"/><polygon points="751.9,564.5 754.1,565.3 951.7,476.5 949.8,476.1"/><polygon points="754.1,565.3 756.3,566.1 953.6,476.9 951.7,476.5"/><polygon points="756.3,566.1 758.6,566.9 955.5,477.3 953.6,476.9"/><polygon points="758.6,566.9 760.8,567.8 957.5,477.7 955.5,477.3"/><polygon points="760.8,567.8 763.0,568.6 959.4,478.1 957.5,477.7"/><polygon points="763.0,568.6 765.3,569.5 961.4,478.5 959.4,478.1"/><polygon points="765.3,569.5 767.6,570.3 963.3,478.9 961.4,478.5"/><polygon points="767.6,570.3 769.9,571.2 965.3,479.3 963.3,478.9"/><polygon points="769.9,571.2 772.2,572.0 967.3,479.7 965.3,479.3"/></g></mask><g mask="url(#pm)"><polygon points="537.7,484.6 772.2,572.0 967.3,479.7 745.9,434.0" fill="rgb(96,96,98)" fill-opacity="0.32"/><path d="M537.7 484.6 L745.9 434.0 M537.7 484.6 L772.2 572.0 M551.9 489.9 L760.5 437.0 M560.0 479.2 L794.9 561.3 M566.7 495.4 L775.7 440.2 M581.2 474.1 L816.1 551.2 M582.4 501.3 L791.4 443.4 M601.3 469.2 L835.8 541.9 M598.9 507.4 L807.8 446.8 M620.4 464.5 L854.2 533.2 M616.3 513.9 L824.9 450.3 M638.7 460.1 L871.5 525.0 M634.7 520.8 L842.7 454.0 M656.1 455.8 L887.7 517.4 M654.2 528.0 L861.2 457.8 M672.8 451.8 L902.9 510.1 M674.9 535.8 L880.6 461.8 M688.7 447.9 L917.3 503.4 M697.0 544.0 L900.8 466.0 M703.9 444.2 L930.8 496.9 M720.4 552.7 L921.9 470.3 M718.5 440.7 L943.6 490.9 M745.4 562.0 L944.1 474.9 M732.5 437.3 L955.8 485.1 M772.2 572.0 L967.3 479.7 M745.9 434.0 L967.3 479.7" stroke="#fff" stroke-opacity="0.34" stroke-width="1.2" fill="none"/></g>
<rect x="86.2" y="184.5" width="29.8" height="336" fill="url(#vm)"/>
<rect x="82.6" y="179.4" width="37.1" height="10.3" rx="5.15" fill="#a50026" stroke="#fff" stroke-width="1.3"/>
<rect x="82.6" y="515.4" width="37.1" height="10.3" rx="5.15" fill="#313695" stroke="#fff" stroke-width="1.3"/>
<g><text x="137.2" y="189.9" font-size="19.2" fill="#68686a" text-anchor="start">0.7101</text><text x="137.2" y="525.9" font-size="19.2" fill="#68686a" text-anchor="start">-0.0902</text><text x="1421.4" y="184.2" font-size="19.2" fill="#68686a" text-anchor="end">Range: 0.6004</text><text x="463.9" y="315.7" font-size="19.2" fill="#68686a" text-anchor="end">1.3099509999999999</text><text x="470.8" y="375.8" font-size="19.2" fill="#68686a" text-anchor="end">1</text><text x="482.0" y="465.5" font-size="19.2" fill="#68686a" text-anchor="end">0.5</text><text x="492.2" y="549.2" font-size="19.2" fill="#68686a" text-anchor="end">0</text><text x="501.3" y="626.0" font-size="19.2" fill="#68686a" text-anchor="end">-0.5</text><text x="506.2" y="653.8" font-size="19.2" fill="#68686a" text-anchor="end">-0.690049</text><text x="431.2" y="507.4" font-size="19.2" fill="#68686a" text-anchor="start">Z</text><text x="493.6" y="653.8" font-size="19.2" fill="#68686a" text-anchor="start">2</text><text x="520.4" y="682.9" font-size="19.2" fill="#68686a" text-anchor="start">50</text><text x="553.2" y="715.2" font-size="19.2" fill="#68686a" text-anchor="start">100</text><text x="605.9" y="752.3" font-size="19.2" fill="#68686a" text-anchor="start">150</text><text x="667.6" y="797.0" font-size="19.2" fill="#68686a" text-anchor="start">200</text><text x="549.5" y="745.7" font-size="19.2" fill="#68686a" text-anchor="start">X</text><text x="866.0" y="761.1" font-size="19.2" fill="#68686a" text-anchor="start">50</text><text x="912.6" y="718.1" font-size="19.2" fill="#68686a" text-anchor="start">100</text><text x="951.5" y="684.3" font-size="19.2" fill="#68686a" text-anchor="start">150</text><text x="984.6" y="654.8" font-size="19.2" fill="#68686a" text-anchor="start">200</text><text x="997.7" y="643.2" font-size="19.2" fill="#68686a" text-anchor="start">221.5</text><text x="960.9" y="734.3" font-size="19.2" fill="#68686a" text-anchor="start">Y</text><text x="812.2" y="812.0" font-size="19.2" fill="#68686a" text-anchor="start">0</text></g>
</g></svg>
</div></body></html>
